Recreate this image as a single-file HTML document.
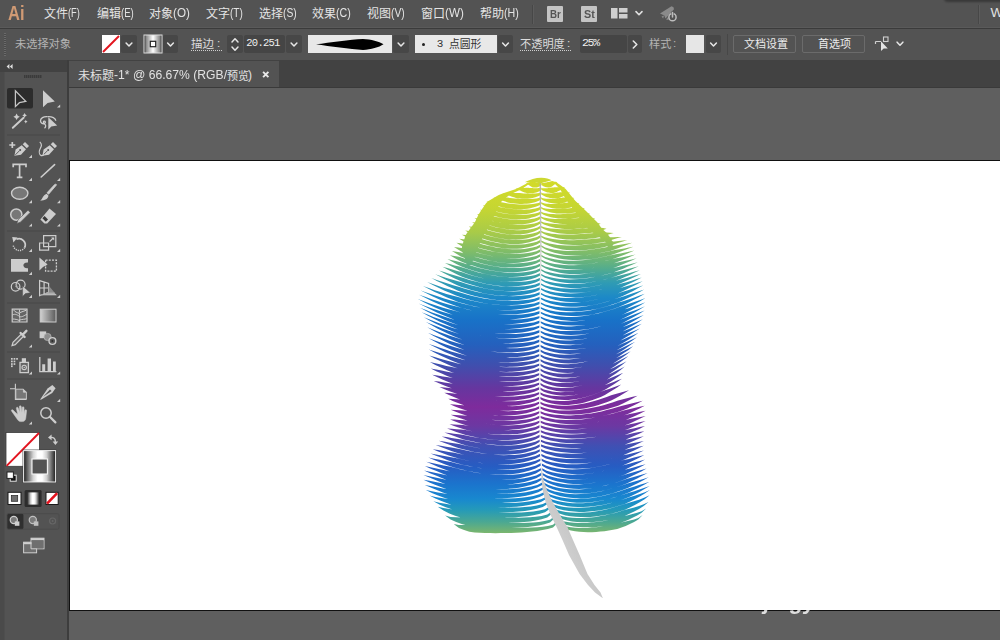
<!DOCTYPE html><html lang="zh"><head><meta charset="utf-8"><title>Adobe Illustrator</title><style>
*{margin:0;padding:0;box-sizing:border-box}
html,body{width:1000px;height:640px;overflow:hidden;background:#5f5f5f;font-family:"Liberation Sans",sans-serif}
#app{position:relative;width:1000px;height:640px;overflow:hidden;background:#5f5f5f}
.abs{position:absolute}
.sr{position:absolute;width:1px;height:1px;overflow:hidden;clip:rect(0 0 0 0);white-space:nowrap;font-size:1px;color:transparent}
svg{position:absolute;overflow:visible}
svg text.t{font-family:"Liberation Sans","Noto Sans CJK SC",sans-serif}
.lat{position:absolute;white-space:nowrap;line-height:1}
#menubar{left:0;top:0;width:1000px;height:29px;background:#535353}
#ctrl{left:0;top:29px;width:1000px;height:31px;background:#535353}
#tabs{left:69px;top:60px;width:931px;height:28px;background:#424242}
#tab{left:69px;top:61px;width:210px;height:26px;background:#535353}
#tools{left:0;top:60px;width:67px;height:580px;background:#535353}
#toolshead{left:0;top:60px;width:67px;height:12px;background:#424242}
#art{left:69px;top:160px;width:940px;height:451px;background:#fff;border:1px solid #111}
.btn{position:absolute;border:1px solid #6b6b6b;border-radius:2px}
.dd{position:absolute;background:#474747;border-radius:2px}
.inp{position:absolute;background:#454545;border-radius:2px}
</style></head><body><div id="app">
<div class="abs" id="art"></div>
<svg class="abs" style="left:0;top:0" width="1000" height="640" viewBox="0 0 1000 640">
<defs><linearGradient id="fg" gradientUnits="userSpaceOnUse" x1="0" y1="178" x2="0" y2="537"><stop offset="0.0000" stop-color="#d5db28"/><stop offset="0.0836" stop-color="#c6d632"/><stop offset="0.1504" stop-color="#a9cb48"/><stop offset="0.2061" stop-color="#7fbc69"/><stop offset="0.2507" stop-color="#55ad8c"/><stop offset="0.2925" stop-color="#2f9bb4"/><stop offset="0.3343" stop-color="#1c88c8"/><stop offset="0.3955" stop-color="#1872c8"/><stop offset="0.4652" stop-color="#2560bd"/><stop offset="0.5209" stop-color="#3f4fae"/><stop offset="0.5850" stop-color="#66369f"/><stop offset="0.6379" stop-color="#7e2b9c"/><stop offset="0.6908" stop-color="#6c38a2"/><stop offset="0.7465" stop-color="#4050b3"/><stop offset="0.8022" stop-color="#275cc2"/><stop offset="0.8524" stop-color="#1b74cd"/><stop offset="0.8942" stop-color="#1888cf"/><stop offset="0.9248" stop-color="#259ab8"/><stop offset="0.9582" stop-color="#4ba892"/><stop offset="0.9833" stop-color="#72b374"/><stop offset="1.0000" stop-color="#8cbc62"/></linearGradient>
<linearGradient id="qg" gradientUnits="userSpaceOnUse" x1="545" y1="560" x2="585" y2="540"><stop offset="0" stop-color="#e9e9e9"/><stop offset=".45" stop-color="#cfcfcf"/><stop offset="1" stop-color="#c4c4c4"/></linearGradient>
<linearGradient id="qg2" gradientUnits="userSpaceOnUse" x1="0" y1="178" x2="0" y2="500"><stop offset="0" stop-color="#adadad"/><stop offset=".18" stop-color="#c4c4c4"/><stop offset=".36" stop-color="#f6f6f6"/><stop offset=".88" stop-color="#f6f6f6"/><stop offset="1" stop-color="#dcdcdc"/></linearGradient></defs>
<path d="M533.3 181.0L527.6 183.0L523.8 185.0L520.0 187.0L516.0 189.0L510.0 191.0L504.0 193.0L498.7 195.0L495.3 197.0L491.9 199.0L488.5 201.0L486.2 203.0L484.8 205.0L483.5 207.0L482.1 209.0L480.8 211.0L479.5 213.0L478.3 215.0L477.4 217.0L476.4 219.0L475.5 221.0L474.4 223.0L472.9 225.0L471.4 227.0L469.9 229.0L468.5 231.0L467.0 233.0L465.7 235.0L465.0 237.0L464.4 239.0L463.7 241.0L463.0 243.0L462.3 245.0L462.0 247.0L461.7 249.0L462.0 251.0L462.8 253.0L463.7 255.0L464.5 257.0L465.1 259.0L465.6 261.0L466.2 263.0L466.7 265.0L470.7 265.0L471.7 263.0L472.7 261.0L473.6 259.0L474.6 257.0L475.4 255.0L476.1 253.0L476.8 251.0L477.5 249.0L478.3 247.0L479.0 245.0L480.0 243.0L480.9 241.0L481.9 239.0L482.9 237.0L483.8 235.0L484.9 233.0L486.1 231.0L487.3 229.0L488.6 227.0L489.8 225.0L491.0 223.0L491.9 221.0L492.8 219.0L493.6 217.0L494.5 215.0L495.3 213.0L496.3 211.0L497.3 209.0L498.3 207.0L499.2 205.0L500.2 203.0L502.0 201.0L504.4 199.0L506.9 197.0L509.4 195.0L513.2 193.0L517.6 191.0L521.9 189.0L524.8 187.0L527.6 185.0L530.3 183.0L534.5 181.0ZM552.2 181.0L557.4 183.0L560.2 185.0L563.0 187.0L565.7 189.0L567.3 191.0L568.9 193.0L570.5 195.0L572.1 197.0L573.7 199.0L575.5 201.0L577.6 203.0L579.7 205.0L581.8 207.0L583.9 209.0L586.0 211.0L588.0 213.0L590.0 215.0L591.9 217.0L593.9 219.0L596.0 221.0L597.9 223.0L599.3 225.0L600.7 227.0L602.2 229.0L604.5 231.0L606.8 233.0L608.2 235.0L609.8 237.0L610.8 239.0L612.2 241.0L614.1 243.0L613.0 245.0L612.0 247.0L610.9 249.0L610.7 251.0L608.3 251.0L607.9 249.0L607.6 247.0L607.2 245.0L606.8 243.0L604.3 241.0L601.8 239.0L599.3 237.0L596.4 235.0L593.5 233.0L590.6 231.0L588.4 229.0L586.7 227.0L585.0 225.0L583.3 223.0L581.6 221.0L580.2 219.0L578.8 217.0L577.3 215.0L575.9 213.0L574.5 211.0L573.0 209.0L571.5 207.0L570.0 205.0L568.5 203.0L567.0 201.0L565.7 199.0L564.5 197.0L563.4 195.0L562.2 193.0L561.1 191.0L559.9 189.0L558.0 187.0L556.0 185.0L554.0 183.0L550.3 181.0Z" fill="url(#fg)"/>
<path d="M541.4 182.8L540.6 182.9L539.9 182.8L539.1 182.7L538.3 182.6L537.5 182.5L536.8 182.4L536.0 182.3L535.2 182.1L534.5 182.0L533.7 181.8L532.9 181.7L532.2 181.8L531.4 182.0L530.6 182.1L529.9 182.3L529.1 182.4L528.3 182.5L527.5 182.6L526.8 182.8L526.0 183.0L526.0 183.0L526.8 183.7L527.5 184.2L528.3 184.8L529.1 185.3L529.9 185.8L530.6 186.3L531.4 186.8L532.2 187.2L532.9 187.6L533.7 187.6L534.5 187.6L535.2 187.6L536.0 187.5L536.8 187.4L537.5 187.2L538.3 186.9L539.1 186.6L539.9 186.2L540.6 185.8L541.4 185.2ZM541.3 187.6L540.1 187.9L538.8 188.1L537.5 188.2L536.2 188.2L534.9 188.2L533.6 188.2L532.3 188.1L531.0 188.1L529.7 188.0L528.4 187.8L527.2 187.7L525.9 187.8L524.6 187.9L523.3 188.0L522.0 188.1L520.7 188.2L519.4 188.2L518.1 188.3L516.8 188.4L515.5 188.5L515.5 188.5L516.8 189.2L518.1 189.7L519.4 190.3L520.7 190.8L522.0 191.4L523.3 191.9L524.6 192.4L525.9 192.8L527.2 193.2L528.4 193.3L529.7 193.3L531.0 193.3L532.3 193.2L533.6 193.0L534.9 192.7L536.2 192.4L537.5 192.0L538.8 191.5L540.1 190.8L541.3 189.9ZM541.3 192.3L539.3 192.9L537.4 193.3L535.4 193.5L533.5 193.6L531.5 193.7L529.6 193.7L527.6 193.6L525.7 193.6L523.7 193.4L521.8 193.3L519.8 193.1L517.9 192.9L515.9 192.9L514.0 192.9L512.0 193.0L510.1 193.0L508.1 193.0L506.2 193.0L504.2 193.0L502.2 193.0L502.2 193.0L504.2 193.8L506.2 194.5L508.1 195.3L510.1 196.0L512.0 196.7L514.0 197.3L515.9 198.0L517.9 198.4L519.8 198.6L521.8 198.7L523.7 198.8L525.7 198.8L527.6 198.7L529.6 198.5L531.5 198.2L533.5 197.8L535.4 197.3L537.4 196.6L539.3 195.8L541.3 194.7ZM541.2 197.1L538.8 197.9L536.4 198.4L534.0 198.7L531.6 198.9L529.2 199.1L526.8 199.1L524.5 199.1L522.1 199.0L519.7 198.9L517.3 198.7L514.9 198.5L512.5 198.2L510.1 197.9L507.7 197.6L505.3 197.5L502.9 197.5L500.5 197.4L498.1 197.3L495.7 197.2L493.3 197.1L493.3 197.1L495.7 198.1L498.1 199.0L500.5 199.9L502.9 200.8L505.3 201.6L507.7 202.4L510.1 202.9L512.5 203.2L514.9 203.5L517.3 203.7L519.7 203.9L522.1 203.9L524.5 203.8L526.8 203.7L529.2 203.4L531.6 202.9L534.0 202.4L536.4 201.7L538.8 200.8L541.2 199.4ZM541.2 201.8L538.4 202.9L535.7 203.5L533.0 204.0L530.2 204.3L527.5 204.5L524.7 204.6L522.0 204.6L519.3 204.5L516.5 204.3L513.8 204.0L511.1 203.7L508.3 203.4L505.6 203.0L502.9 202.5L500.1 202.0L497.4 201.9L494.7 201.7L491.9 201.5L489.2 201.3L486.4 201.2L486.4 201.2L489.2 202.4L491.9 203.5L494.7 204.6L497.4 205.7L500.1 206.8L502.9 207.4L505.6 207.9L508.3 208.4L511.1 208.7L513.8 209.0L516.5 209.2L519.3 209.3L522.0 209.2L524.7 209.1L527.5 208.7L530.2 208.3L533.0 207.6L535.7 206.8L538.4 205.8L541.2 204.2ZM541.1 206.6L538.2 207.8L535.3 208.5L532.3 209.0L529.4 209.4L526.5 209.6L523.6 209.7L520.6 209.6L517.7 209.5L514.8 209.3L511.9 209.0L509.0 208.7L506.0 208.2L503.1 207.7L500.2 207.2L497.3 206.6L494.3 206.0L491.4 205.9L488.5 205.7L485.6 205.5L482.7 205.4L482.7 205.4L485.6 206.9L488.5 208.3L491.4 209.6L494.3 210.9L497.3 211.7L500.2 212.4L503.1 213.0L506.0 213.5L509.0 214.0L511.9 214.3L514.8 214.5L517.7 214.6L520.6 214.5L523.6 214.3L526.5 214.0L529.4 213.5L532.3 212.7L535.3 211.8L538.2 210.7L541.1 208.9ZM541.1 211.3L538.0 212.7L534.9 213.6L531.8 214.1L528.8 214.6L525.7 214.8L522.6 214.9L519.6 214.9L516.5 214.8L513.4 214.6L510.4 214.3L507.3 213.9L504.2 213.4L501.2 212.9L498.1 212.2L495.0 211.6L492.0 210.9L488.9 210.4L485.8 210.1L482.8 209.9L479.7 209.8L479.7 209.8L482.8 211.4L485.8 212.9L488.9 214.4L492.0 215.5L495.0 216.3L498.1 217.0L501.2 217.7L504.2 218.2L507.3 218.7L510.4 219.1L513.4 219.3L516.5 219.5L519.6 219.4L522.6 219.2L525.7 218.9L528.8 218.4L531.8 217.6L534.9 216.7L538.0 215.5L541.1 213.7ZM541.0 216.1L537.8 217.6L534.6 218.5L531.4 219.1L528.2 219.5L525.0 219.8L521.8 220.0L518.6 219.9L515.3 219.8L512.1 219.6L508.9 219.2L505.7 218.8L502.5 218.3L499.3 217.6L496.1 217.0L492.9 216.2L489.7 215.5L486.5 214.6L483.3 214.4L480.1 214.2L476.9 214.1L476.9 214.1L480.1 215.9L483.3 217.7L486.5 219.2L489.7 220.2L492.9 221.1L496.1 221.9L499.3 222.6L502.5 223.2L505.7 223.8L508.9 224.2L512.1 224.5L515.3 224.6L518.6 224.6L521.8 224.4L525.0 224.0L528.2 223.5L531.4 222.7L534.6 221.7L537.8 220.4L541.0 218.4ZM540.9 220.8L537.6 222.5L534.3 223.4L531.0 224.1L527.6 224.5L524.3 224.8L521.0 224.9L517.7 224.9L514.4 224.8L511.0 224.5L507.7 224.1L504.4 223.6L501.1 223.0L497.8 222.3L494.4 221.6L491.1 220.8L487.8 219.9L484.5 219.0L481.1 218.5L477.8 218.3L474.5 218.2L474.5 218.2L477.8 220.2L481.1 222.1L484.5 223.8L487.8 224.8L491.1 225.8L494.4 226.7L497.8 227.5L501.1 228.2L504.4 228.8L507.7 229.3L511.0 229.6L514.4 229.7L517.7 229.7L521.0 229.5L524.3 229.2L527.6 228.6L531.0 227.7L534.3 226.7L537.6 225.3L540.9 223.2ZM540.9 225.6L537.4 227.4L534.0 228.4L530.6 229.2L527.1 229.7L523.7 230.0L520.3 230.2L516.8 230.2L513.4 230.0L509.9 229.7L506.5 229.3L503.1 228.7L499.6 228.1L496.2 227.4L492.8 226.5L489.3 225.6L485.9 224.6L482.4 223.6L479.0 223.0L475.6 222.6L472.1 222.3L472.1 222.3L475.6 224.4L479.0 226.3L482.4 228.0L485.9 229.1L489.3 230.2L492.8 231.2L496.2 232.0L499.6 232.8L503.1 233.5L506.5 234.0L509.9 234.4L513.4 234.6L516.8 234.6L520.3 234.4L523.7 234.1L527.1 233.5L530.6 232.6L534.0 231.5L537.4 230.1L540.9 227.9ZM540.8 230.3L537.2 232.2L533.6 233.2L530.0 234.0L526.4 234.6L522.8 234.9L519.2 235.0L515.6 235.0L512.0 234.8L508.4 234.5L504.8 234.0L501.2 233.4L497.6 232.7L494.0 231.9L490.3 231.0L486.7 230.0L483.1 229.0L479.5 227.8L475.9 227.1L472.3 226.7L468.7 226.4L468.7 226.4L472.3 228.7L475.9 230.8L479.5 232.6L483.1 233.8L486.7 234.9L490.3 235.9L494.0 236.9L497.6 237.7L501.2 238.4L504.8 239.0L508.4 239.4L512.0 239.6L515.6 239.7L519.2 239.5L522.8 239.1L526.4 238.5L530.0 237.6L533.6 236.5L537.2 235.0L540.8 232.7ZM540.8 235.1L537.0 237.0L533.2 238.1L529.4 238.9L525.7 239.4L521.9 239.8L518.1 239.9L514.3 239.9L510.6 239.7L506.8 239.4L503.0 238.9L499.2 238.3L495.5 237.5L491.7 236.7L487.9 235.7L484.1 234.7L480.3 233.6L476.6 232.4L472.8 231.5L469.0 230.9L465.2 230.5L465.2 230.5L469.0 232.9L472.8 235.0L476.6 236.7L480.3 237.9L484.1 239.1L487.9 240.2L491.7 241.2L495.5 242.0L499.2 242.8L503.0 243.4L506.8 243.8L510.6 244.1L514.3 244.1L518.1 244.0L521.9 243.7L525.7 243.1L529.4 242.3L533.2 241.1L537.0 239.7L540.8 237.4ZM540.7 239.8L536.8 241.7L532.8 242.8L528.9 243.6L525.0 244.2L521.0 244.5L517.1 244.6L513.1 244.6L509.2 244.4L505.3 244.0L501.3 243.5L497.4 242.9L493.4 242.1L489.5 241.2L485.6 240.2L481.6 239.1L477.7 237.9L473.7 236.7L469.8 235.7L465.9 235.1L461.9 234.7L461.9 234.7L465.9 237.1L469.8 239.3L473.7 241.0L477.7 242.3L481.6 243.5L485.6 244.6L489.5 245.7L493.4 246.6L497.4 247.3L501.3 248.0L505.3 248.4L509.2 248.7L513.1 248.8L517.1 248.7L521.0 248.4L525.0 247.8L528.9 247.0L532.8 245.9L536.8 244.4L540.7 242.2ZM540.7 244.6L536.6 246.5L532.5 247.6L528.4 248.3L524.4 248.9L520.3 249.2L516.2 249.3L512.1 249.3L508.1 249.0L504.0 248.6L499.9 248.1L495.8 247.4L491.8 246.6L487.7 245.7L483.6 244.7L479.5 243.5L475.5 242.3L471.4 241.0L467.3 239.9L463.3 239.3L459.2 238.8L459.2 238.8L463.3 241.3L467.3 243.5L471.4 245.2L475.5 246.6L479.5 247.9L483.6 249.1L487.7 250.1L491.8 251.1L495.8 251.9L499.9 252.6L504.0 253.1L508.1 253.4L512.1 253.5L516.2 253.4L520.3 253.1L524.4 252.6L528.4 251.7L532.5 250.6L536.6 249.2L540.7 246.9ZM540.6 249.3L536.4 251.2L532.2 252.2L528.0 253.0L523.8 253.5L519.6 253.8L515.3 253.9L511.1 253.8L506.9 253.5L502.7 253.1L498.5 252.5L494.3 251.8L490.1 251.0L485.9 250.0L481.7 249.0L477.5 247.8L473.3 246.5L469.1 245.1L464.9 244.0L460.6 243.3L456.4 242.8L456.4 242.8L460.6 245.5L464.9 247.9L469.1 249.7L473.3 251.1L477.5 252.4L481.7 253.7L485.9 254.8L490.1 255.8L494.3 256.7L498.5 257.4L502.7 257.9L506.9 258.2L511.1 258.3L515.3 258.3L519.6 257.9L523.8 257.4L528.0 256.6L532.2 255.5L536.4 254.0L540.6 251.7ZM540.5 254.1L536.2 255.9L531.9 257.0L527.6 257.7L523.2 258.2L518.9 258.5L514.6 258.6L510.3 258.5L505.9 258.2L501.6 257.8L497.3 257.2L493.0 256.4L488.6 255.5L484.3 254.5L480.0 253.4L475.7 252.2L471.3 250.8L467.0 249.4L462.7 248.2L458.4 247.5L454.0 247.0L454.0 247.0L458.4 249.7L462.7 252.2L467.0 254.0L471.3 255.5L475.7 256.9L480.0 258.1L484.3 259.3L488.6 260.3L493.0 261.2L497.3 262.0L501.6 262.5L505.9 262.9L510.3 263.0L514.6 263.0L518.9 262.7L523.2 262.1L527.6 261.3L531.9 260.2L536.2 258.7L540.5 256.4ZM540.5 258.8L536.1 260.7L531.6 261.8L527.2 262.5L522.8 263.1L518.4 263.3L513.9 263.4L509.5 263.3L505.1 263.0L500.7 262.5L496.2 261.9L491.8 261.1L487.4 260.2L483.0 259.2L478.5 258.0L474.1 256.7L469.7 255.4L465.3 253.9L460.8 252.5L456.4 251.7L452.0 251.1L452.0 251.1L456.4 253.8L460.8 256.4L465.3 258.2L469.7 259.7L474.1 261.1L478.5 262.4L483.0 263.7L487.4 264.7L491.8 265.7L496.2 266.4L500.7 267.0L505.1 267.4L509.5 267.6L513.9 267.6L518.4 267.3L522.8 266.8L527.2 266.0L531.6 264.9L536.1 263.4L540.5 261.2ZM540.4 263.6L535.9 265.4L531.4 266.5L526.9 267.3L522.3 267.8L517.8 268.0L513.3 268.1L508.8 268.0L504.2 267.7L499.7 267.2L495.2 266.5L490.7 265.7L486.1 264.8L481.6 263.7L477.1 262.5L472.6 261.2L468.0 259.7L463.5 258.2L459.0 256.8L454.5 256.0L449.9 255.2L449.9 255.2L454.5 258.0L459.0 260.6L463.5 262.5L468.0 264.0L472.6 265.5L477.1 266.9L481.6 268.2L486.1 269.3L490.7 270.3L495.2 271.1L499.7 271.7L504.2 272.1L508.8 272.3L513.3 272.3L517.8 272.0L522.3 271.5L526.9 270.7L531.4 269.7L535.9 268.2L540.4 265.9ZM540.4 268.3L535.7 270.2L531.1 271.3L526.4 272.0L521.8 272.5L517.2 272.8L512.5 272.8L507.9 272.7L503.2 272.3L498.6 271.8L494.0 271.1L489.3 270.3L484.7 269.3L480.0 268.2L475.4 266.9L470.8 265.5L466.1 264.0L461.5 262.4L456.8 261.3L452.2 260.2L447.5 259.1L447.5 259.1L452.2 261.8L456.8 264.2L461.5 266.5L466.1 268.2L470.8 269.8L475.4 271.2L480.0 272.5L484.7 273.7L489.3 274.7L494.0 275.6L498.6 276.3L503.2 276.7L507.9 277.0L512.5 277.0L517.2 276.7L521.8 276.2L526.4 275.5L531.1 274.4L535.7 273.0L540.4 270.7ZM540.3 273.1L535.5 274.9L530.8 275.9L526.0 276.6L521.3 277.1L516.5 277.3L511.7 277.3L507.0 277.1L502.2 276.7L497.4 276.2L492.7 275.5L487.9 274.6L483.1 273.5L478.4 272.4L473.6 271.0L468.9 269.6L464.1 268.0L459.3 266.6L454.6 265.4L449.8 264.1L445.0 262.9L445.0 262.9L449.8 265.6L454.6 268.1L459.3 270.5L464.1 272.5L468.9 274.2L473.6 275.7L478.4 277.1L483.1 278.3L487.9 279.4L492.7 280.3L497.4 281.0L502.2 281.5L507.0 281.8L511.7 281.8L516.5 281.6L521.3 281.1L526.0 280.3L530.8 279.2L535.5 277.7L540.3 275.4ZM540.3 277.8L535.4 279.7L530.5 280.7L525.6 281.4L520.7 281.8L515.8 282.0L510.9 282.0L506.0 281.8L501.2 281.4L496.3 280.8L491.4 280.0L486.5 279.1L481.6 278.0L476.7 276.8L471.8 275.4L467.0 273.9L462.1 272.2L457.2 271.0L452.3 269.6L447.4 268.1L442.5 266.7L442.5 266.7L447.4 269.4L452.3 271.9L457.2 274.4L462.1 276.7L467.0 278.4L471.8 280.0L476.7 281.4L481.6 282.7L486.5 283.9L491.4 284.8L496.3 285.6L501.2 286.1L506.0 286.4L510.9 286.5L515.8 286.3L520.7 285.8L525.6 285.0L530.5 284.0L535.4 282.5L540.3 280.2ZM540.2 282.6L535.1 284.4L530.1 285.5L525.0 286.2L520.0 286.6L514.9 286.8L509.8 286.8L504.8 286.6L499.7 286.2L494.7 285.5L489.6 284.7L484.6 283.8L479.5 282.6L474.4 281.3L469.4 279.9L464.3 278.3L459.3 276.7L454.2 275.3L449.1 273.7L444.1 272.1L439.0 270.5L439.0 270.5L444.1 273.2L449.1 275.7L454.2 278.2L459.3 280.5L464.3 282.5L469.4 284.1L474.4 285.6L479.5 287.0L484.6 288.2L489.6 289.2L494.7 290.0L499.7 290.6L504.8 290.9L509.8 291.0L514.9 290.9L520.0 290.4L525.0 289.7L530.1 288.6L535.1 287.2L540.2 284.9ZM540.1 287.3L534.9 289.1L529.7 290.1L524.4 290.8L519.2 291.2L513.9 291.4L508.7 291.3L503.4 291.0L498.2 290.6L492.9 289.9L487.7 289.1L482.5 288.0L477.2 286.8L472.0 285.5L466.7 284.0L461.5 282.3L456.2 280.8L451.0 279.3L445.8 277.7L440.5 276.0L435.3 274.2L435.3 274.2L440.5 277.1L445.8 279.7L451.0 282.2L456.2 284.7L461.5 286.9L466.7 288.6L472.0 290.2L477.2 291.6L482.5 292.9L487.7 294.0L492.9 294.8L498.2 295.4L503.4 295.8L508.7 295.9L513.9 295.8L519.2 295.3L524.4 294.6L529.7 293.5L534.9 292.0L540.1 289.7ZM540.1 292.1L534.6 293.9L529.2 294.9L523.8 295.6L518.3 296.0L512.9 296.2L507.5 296.1L502.0 295.9L496.6 295.4L491.2 294.7L485.7 293.8L480.3 292.7L474.9 291.5L469.4 290.0L464.0 288.5L458.6 286.8L453.1 285.3L447.7 283.6L442.3 281.8L436.8 280.0L431.4 278.1L431.4 278.1L436.8 280.9L442.3 283.6L447.7 286.2L453.1 288.6L458.6 290.9L464.0 292.8L469.4 294.4L474.9 295.9L480.3 297.2L485.7 298.3L491.2 299.2L496.6 299.9L502.0 300.3L507.5 300.4L512.9 300.3L518.3 299.9L523.8 299.2L529.2 298.2L534.6 296.7L540.1 294.4ZM540.0 296.8L534.4 298.7L528.7 299.7L523.1 300.3L517.5 300.7L511.8 300.9L506.2 300.8L500.5 300.5L494.9 300.0L489.2 299.3L483.6 298.4L478.0 297.3L472.3 296.0L466.7 294.5L461.0 292.8L455.4 291.2L449.8 289.6L444.1 287.9L438.5 286.0L432.8 284.1L427.2 282.1L427.2 282.1L432.8 285.0L438.5 287.7L444.1 290.4L449.8 292.8L455.4 295.2L461.0 297.2L466.7 298.9L472.3 300.5L478.0 301.8L483.6 302.9L489.2 303.9L494.9 304.6L500.5 305.0L506.2 305.2L511.8 305.1L517.5 304.7L523.1 304.0L528.7 302.9L534.4 301.5L540.0 299.2ZM540.0 301.6L534.1 303.4L528.3 304.3L522.4 304.9L516.6 305.3L510.7 305.4L504.9 305.3L499.0 305.0L493.2 304.4L487.3 303.7L481.5 302.8L475.6 301.6L469.8 300.3L463.9 298.7L458.1 297.0L452.2 295.5L446.4 293.9L440.5 292.1L434.7 290.2L428.8 288.1L423.0 286.1L423.0 286.1L428.8 289.1L434.7 292.0L440.5 294.6L446.4 297.2L452.2 299.6L458.1 301.9L463.9 303.6L469.8 305.2L475.6 306.6L481.5 307.7L487.3 308.7L493.2 309.4L499.0 309.9L504.9 310.1L510.7 310.0L516.6 309.6L522.4 308.8L528.3 307.8L534.1 306.3L540.0 303.9ZM539.9 306.3L534.0 308.1L528.0 309.1L522.0 309.8L516.0 310.2L510.0 310.3L504.1 310.2L498.1 309.9L492.1 309.3L486.1 308.5L480.1 307.6L474.2 306.4L468.2 305.0L462.2 303.5L456.2 301.8L450.2 300.2L444.2 298.5L438.3 296.6L432.3 294.6L426.3 292.5L420.3 290.3L420.3 290.3L426.3 293.3L432.3 296.2L438.3 298.9L444.2 301.4L450.2 303.8L456.2 306.1L462.2 308.0L468.2 309.6L474.2 311.0L480.1 312.2L486.1 313.2L492.1 313.9L498.1 314.4L504.1 314.6L510.0 314.5L516.0 314.2L522.0 313.5L528.0 312.4L534.0 311.0L539.9 308.7ZM539.9 311.1L533.9 312.8L527.8 313.8L521.8 314.4L515.7 314.8L509.7 314.9L503.6 314.7L497.6 314.4L491.6 313.8L485.5 313.0L479.5 312.0L473.4 310.8L467.4 309.4L461.3 307.8L455.3 306.3L449.3 304.7L443.2 302.9L437.2 301.0L431.1 299.0L425.1 296.8L419.0 294.7L419.0 294.7L425.1 297.8L431.1 300.7L437.2 303.5L443.2 306.1L449.3 308.5L455.3 310.8L461.3 312.8L467.4 314.4L473.4 315.9L479.5 317.1L485.5 318.1L491.6 318.8L497.6 319.3L503.6 319.5L509.7 319.4L515.7 319.1L521.8 318.3L527.8 317.3L533.9 315.8L539.9 313.4ZM539.9 315.9L533.8 317.6L527.7 318.5L521.5 319.2L515.4 319.5L509.3 319.6L503.2 319.4L497.1 319.1L491.0 318.5L484.9 317.7L478.8 316.7L472.7 315.5L466.6 314.1L460.5 312.4L454.4 310.8L448.3 309.2L442.2 307.4L436.1 305.5L430.0 303.4L423.9 301.3L417.8 299.1L417.8 299.1L423.9 302.2L430.0 305.2L436.1 308.0L442.2 310.6L448.3 313.1L454.4 315.4L460.5 317.4L466.6 319.1L472.7 320.5L478.8 321.7L484.9 322.8L491.0 323.5L497.1 324.0L503.2 324.3L509.3 324.2L515.4 323.8L521.5 323.1L527.7 322.0L533.8 320.5L539.9 318.1ZM539.8 320.6L533.8 322.4L527.7 323.3L521.6 323.9L515.6 324.3L509.5 324.4L503.5 324.2L497.4 323.8L491.3 323.2L485.3 322.4L479.2 321.4L473.1 320.2L467.1 318.7L461.0 317.1L455.0 315.5L448.9 313.8L442.8 312.0L436.8 310.0L430.7 307.9L424.7 305.7L418.6 303.4L418.6 303.4L424.7 306.6L430.7 309.6L436.8 312.4L442.8 315.1L448.9 317.6L455.0 319.9L461.0 322.0L467.1 323.6L473.1 325.1L479.2 326.4L485.3 327.4L491.3 328.2L497.4 328.7L503.5 328.9L509.5 328.9L515.6 328.5L521.6 327.8L527.7 326.7L533.8 325.3L539.8 322.9ZM539.8 325.4L533.8 327.2L527.8 328.1L521.8 328.8L515.8 329.1L509.8 329.2L503.8 329.1L497.9 328.7L491.9 328.1L485.9 327.3L479.9 326.2L473.9 325.0L467.9 323.5L461.9 321.8L455.9 320.2L449.9 318.5L443.9 316.6L438.0 314.5L432.0 312.4L426.0 310.1L420.0 307.8L420.0 307.8L426.0 311.0L432.0 314.0L438.0 316.8L443.9 319.5L449.9 322.0L455.9 324.3L461.9 326.4L467.9 328.1L473.9 329.6L479.9 330.9L485.9 331.9L491.9 332.7L497.9 333.2L503.8 333.5L509.8 333.5L515.8 333.1L521.8 332.4L527.8 331.4L533.8 330.0L539.8 327.6ZM539.8 330.1L533.8 331.9L527.9 332.9L522.0 333.5L516.1 333.9L510.2 334.0L504.3 333.8L498.4 333.4L492.5 332.8L486.6 331.9L480.7 330.9L474.8 329.6L468.8 328.1L462.9 326.4L457.0 324.8L451.1 323.0L445.2 321.1L439.3 319.1L433.4 316.9L427.5 314.6L421.6 312.3L421.6 312.3L427.5 315.5L433.4 318.6L439.3 321.4L445.2 324.1L451.1 326.7L457.0 329.0L462.9 331.1L468.8 332.8L474.8 334.3L480.7 335.6L486.6 336.7L492.5 337.5L498.4 338.0L504.3 338.2L510.2 338.2L516.1 337.9L522.0 337.2L527.9 336.2L533.8 334.7L539.8 332.4ZM539.7 334.9L533.9 336.7L528.1 337.7L522.3 338.3L516.5 338.7L510.7 338.8L504.9 338.6L499.1 338.2L493.3 337.6L487.5 336.7L481.7 335.7L475.9 334.4L470.1 332.9L464.3 331.2L458.6 329.6L452.8 327.9L447.0 326.0L441.2 323.9L435.4 321.7L429.6 319.5L423.8 317.2L423.8 317.2L429.6 320.4L435.4 323.4L441.2 326.3L447.0 329.0L452.8 331.5L458.6 333.8L464.3 336.0L470.1 337.6L475.9 339.1L481.7 340.4L487.5 341.4L493.3 342.2L499.1 342.7L504.9 343.0L510.7 342.9L516.5 342.6L522.3 341.9L528.1 340.9L533.9 339.5L539.7 337.1ZM539.7 339.6L534.0 341.4L528.3 342.3L522.6 343.0L516.9 343.3L511.2 343.4L505.6 343.2L499.9 342.8L494.2 342.1L488.5 341.3L482.8 340.2L477.1 338.9L471.4 337.4L465.8 335.8L460.1 334.2L454.4 332.5L448.7 330.7L443.0 328.7L437.3 326.5L431.6 324.3L426.0 322.1L426.0 322.1L431.6 325.3L437.3 328.4L443.0 331.2L448.7 334.0L454.4 336.5L460.1 338.8L465.8 341.0L471.4 342.7L477.1 344.1L482.8 345.4L488.5 346.4L494.2 347.2L499.9 347.7L505.6 347.9L511.2 347.8L516.9 347.5L522.6 346.8L528.3 345.7L534.0 344.2L539.7 341.9ZM539.6 344.4L534.0 346.2L528.4 347.2L522.8 347.8L517.2 348.2L511.6 348.3L505.9 348.1L500.3 347.7L494.7 347.1L489.1 346.3L483.5 345.2L477.9 344.0L472.3 342.5L466.6 340.9L461.0 339.3L455.4 337.6L449.8 335.8L444.2 333.8L438.6 331.7L433.0 329.5L427.3 327.3L427.3 327.3L433.0 330.5L438.6 333.5L444.2 336.3L449.8 338.9L455.4 341.4L461.0 343.7L466.6 345.8L472.3 347.4L477.9 348.9L483.5 350.1L489.1 351.1L494.7 351.8L500.3 352.3L505.9 352.5L511.6 352.5L517.2 352.1L522.8 351.4L528.4 350.4L534.0 349.0L539.6 346.6ZM539.6 349.1L534.0 350.9L528.4 351.9L522.9 352.5L517.3 352.9L511.7 353.0L506.1 352.9L500.5 352.5L495.0 351.9L489.4 351.1L483.8 350.0L478.2 348.8L472.6 347.4L467.1 345.8L461.5 344.3L455.9 342.7L450.3 340.9L444.7 339.0L439.2 337.0L433.6 334.9L428.0 332.8L428.0 332.8L433.6 335.9L439.2 338.8L444.7 341.6L450.3 344.2L455.9 346.6L461.5 348.8L467.1 350.9L472.6 352.5L478.2 353.9L483.8 355.1L489.4 356.0L495.0 356.8L500.5 357.2L506.1 357.4L511.7 357.3L517.3 356.9L522.9 356.2L528.4 355.2L534.0 353.7L539.6 351.4ZM539.6 353.9L534.1 355.7L528.5 356.6L523.0 357.3L517.4 357.6L511.9 357.7L506.3 357.6L500.8 357.2L495.2 356.7L489.7 355.9L484.1 354.9L478.6 353.7L473.0 352.3L467.5 350.8L461.9 349.3L456.4 347.8L450.8 346.0L445.3 344.2L439.8 342.3L434.2 340.3L428.7 338.2L428.7 338.2L434.2 341.3L439.8 344.2L445.3 346.9L450.8 349.4L456.4 351.8L461.9 354.0L467.5 356.0L473.0 357.6L478.6 358.9L484.1 360.1L489.7 361.0L495.2 361.7L500.8 362.1L506.3 362.3L511.9 362.1L517.4 361.7L523.0 361.0L528.5 359.9L534.1 358.5L539.6 356.1ZM539.6 358.6L534.1 360.4L528.5 361.4L523.0 362.1L517.4 362.5L511.9 362.6L506.4 362.5L500.8 362.2L495.3 361.7L489.7 360.9L484.2 359.9L478.7 358.8L473.1 357.5L467.6 356.0L462.0 354.6L456.5 353.1L451.0 351.4L445.4 349.6L439.9 347.7L434.3 345.8L428.8 343.9L428.8 343.9L434.3 346.8L439.9 349.6L445.4 352.2L451.0 354.6L456.5 356.9L462.0 359.0L467.6 361.0L473.1 362.5L478.7 363.8L484.2 364.9L489.7 365.8L495.3 366.4L500.8 366.8L506.4 366.9L511.9 366.8L517.4 366.4L523.0 365.7L528.5 364.6L534.1 363.2L539.6 360.9ZM539.6 363.4L534.1 365.2L528.5 366.1L523.0 366.8L517.4 367.2L511.9 367.3L506.4 367.2L500.8 366.9L495.3 366.3L489.7 365.6L484.2 364.7L478.7 363.6L473.1 362.3L467.6 360.8L462.0 359.4L456.5 358.0L451.0 356.4L445.4 354.8L439.9 353.0L434.3 351.3L428.8 349.5L428.8 349.5L434.3 352.5L439.9 355.2L445.4 357.8L451.0 360.2L456.5 362.5L462.0 364.6L467.6 366.4L473.1 367.8L478.7 369.0L484.2 370.0L489.7 370.9L495.3 371.5L500.8 371.8L506.4 371.9L511.9 371.8L517.4 371.3L523.0 370.5L528.5 369.5L534.1 368.0L539.6 365.6ZM539.6 368.1L534.1 369.9L528.6 371.0L523.0 371.7L517.5 372.1L512.0 372.3L506.5 372.2L500.9 371.9L495.4 371.4L489.9 370.8L484.4 369.9L478.9 368.8L473.3 367.6L467.8 366.2L462.3 364.6L456.8 363.3L451.3 361.8L445.7 360.3L440.2 358.7L434.7 357.1L429.2 355.6L429.2 355.6L434.7 358.5L440.2 361.1L445.7 363.6L451.3 365.9L456.8 368.0L462.3 370.0L467.8 371.5L473.3 372.8L478.9 373.9L484.4 374.9L489.9 375.7L495.4 376.2L500.9 376.5L506.5 376.6L512.0 376.4L517.5 375.9L523.0 375.2L528.6 374.1L534.1 372.7L539.6 370.4ZM539.6 372.9L534.1 374.7L528.6 375.7L523.2 376.3L517.7 376.8L512.2 376.9L506.7 376.9L501.2 376.7L495.7 376.2L490.3 375.6L484.8 374.8L479.3 373.8L473.8 372.6L468.3 371.3L462.8 369.9L457.4 368.3L451.9 367.1L446.4 365.9L440.9 364.5L435.4 363.2L429.9 362.0L429.9 362.0L435.4 364.9L440.9 367.5L446.4 369.9L451.9 372.2L457.4 374.3L462.8 375.8L468.3 377.2L473.8 378.4L479.3 379.4L484.8 380.3L490.3 380.9L495.7 381.4L501.2 381.6L506.7 381.6L512.2 381.4L517.7 380.9L523.2 380.1L528.6 379.0L534.1 377.5L539.6 375.1ZM539.6 377.6L534.2 379.4L528.7 380.5L523.3 381.2L517.8 381.6L512.4 381.9L507.0 381.9L501.5 381.7L496.1 381.3L490.6 380.8L485.2 380.0L479.8 379.1L474.3 378.1L468.9 376.9L463.4 375.6L458.0 374.1L452.6 372.8L447.1 371.7L441.7 370.6L436.2 369.5L430.8 368.5L430.8 368.5L436.2 371.2L441.7 373.6L447.1 375.9L452.6 378.1L458.0 379.8L463.4 381.2L468.9 382.4L474.3 383.5L479.8 384.5L485.2 385.2L490.6 385.8L496.1 386.2L501.5 386.4L507.0 386.4L512.4 386.1L517.8 385.6L523.3 384.8L528.7 383.7L534.2 382.2L539.6 379.9ZM539.6 382.4L534.2 384.2L528.9 385.2L523.5 385.9L518.1 386.4L512.7 386.6L507.4 386.7L502.0 386.5L496.6 386.2L491.2 385.7L485.9 385.0L480.5 384.2L475.1 383.2L469.8 382.1L464.4 380.9L459.0 379.5L453.6 378.3L448.3 377.3L442.9 376.4L437.5 375.5L432.1 374.7L432.1 374.7L437.5 377.3L442.9 379.7L448.3 381.9L453.6 383.9L459.0 385.5L464.4 386.7L469.8 387.8L475.1 388.8L480.5 389.7L485.9 390.4L491.2 391.0L496.6 391.3L502.0 391.4L507.4 391.3L512.7 391.0L518.1 390.4L523.5 389.6L528.9 388.5L534.2 387.0L539.6 384.6ZM539.6 387.1L534.3 389.0L529.0 390.0L523.7 390.8L518.4 391.3L513.1 391.6L507.8 391.7L502.5 391.6L497.2 391.3L491.9 390.9L486.7 390.3L481.4 389.5L476.1 388.7L470.8 387.7L465.5 386.5L460.2 385.3L454.9 384.0L449.6 383.2L444.3 382.4L439.0 381.6L433.7 380.9L433.7 380.9L439.0 383.3L444.3 385.5L449.6 387.6L454.9 389.5L460.2 390.8L465.5 391.9L470.8 392.9L476.1 393.8L481.4 394.6L486.7 395.3L491.9 395.7L497.2 396.0L502.5 396.1L507.8 396.0L513.1 395.7L518.4 395.1L523.7 394.3L529.0 393.2L534.3 391.7L539.6 389.4ZM539.6 391.9L534.6 393.7L529.6 394.8L524.6 395.6L519.6 396.1L514.6 396.5L509.6 396.6L504.6 396.5L499.6 396.3L494.6 395.9L489.6 395.3L484.6 394.7L479.6 393.9L474.6 392.9L469.6 391.9L464.6 390.8L459.6 389.5L454.6 388.8L449.5 388.1L444.5 387.4L439.5 386.9L439.5 386.9L444.5 389.2L449.5 391.2L454.6 393.1L459.6 394.9L464.6 396.1L469.6 397.1L474.6 398.1L479.6 398.9L484.6 399.7L489.6 400.2L494.6 400.6L499.6 400.9L504.6 400.9L509.6 400.8L514.6 400.4L519.6 399.8L524.6 399.0L529.6 397.9L534.6 396.4L539.6 394.1ZM539.6 396.6L534.8 398.5L530.1 399.5L525.3 400.3L520.5 400.8L515.8 401.2L511.0 401.3L506.2 401.2L501.5 401.0L496.7 400.7L491.9 400.2L487.2 399.5L482.4 398.8L477.6 397.9L472.9 397.0L468.1 395.9L463.3 394.8L458.6 394.2L453.8 393.6L449.0 393.1L444.3 392.8L444.3 392.8L449.0 395.1L453.8 397.1L458.6 399.0L463.3 400.7L468.1 401.7L472.9 402.7L477.6 403.5L482.4 404.3L487.2 404.9L491.9 405.4L496.7 405.8L501.5 406.0L506.2 406.0L511.0 405.8L515.8 405.4L520.5 404.7L525.3 403.8L530.1 402.7L534.8 401.2L539.6 398.9ZM539.6 401.4L535.1 403.2L530.5 404.3L525.9 405.1L521.3 405.6L516.8 406.0L512.2 406.2L507.6 406.1L503.0 406.0L498.5 405.7L493.9 405.2L489.3 404.6L484.8 403.9L480.2 403.2L475.6 402.3L471.0 401.3L466.5 400.3L461.9 399.8L457.3 399.3L452.7 398.9L448.2 398.7L448.2 398.7L452.7 400.9L457.3 402.7L461.9 404.5L466.5 406.1L471.0 407.0L475.6 407.9L480.2 408.7L484.8 409.4L489.3 410.0L493.9 410.4L498.5 410.7L503.0 410.8L507.6 410.8L512.2 410.6L516.8 410.1L521.3 409.5L525.9 408.6L530.5 407.4L535.1 405.9L539.6 403.6ZM539.7 406.1L535.2 408.0L530.7 409.1L526.2 410.0L521.8 410.5L517.3 410.9L512.8 411.1L508.3 411.2L503.8 411.0L499.3 410.8L494.8 410.4L490.3 409.8L485.8 409.2L481.3 408.5L476.9 407.7L472.4 406.8L467.9 405.8L463.4 405.3L458.9 404.9L454.4 404.5L449.9 404.3L449.9 404.3L454.4 406.2L458.9 408.0L463.4 409.6L467.9 411.0L472.4 411.9L476.9 412.8L481.3 413.5L485.8 414.2L490.3 414.7L494.8 415.1L499.3 415.4L503.8 415.5L508.3 415.4L512.8 415.2L517.3 414.8L521.8 414.1L526.2 413.3L530.7 412.1L535.2 410.6L539.7 408.4ZM539.8 410.9L535.3 412.8L530.9 413.9L526.4 414.7L522.0 415.3L517.5 415.7L513.0 415.9L508.6 415.9L504.1 415.8L499.7 415.6L495.2 415.2L490.8 414.7L486.3 414.1L481.9 413.5L477.4 412.7L473.0 411.9L468.5 411.0L464.0 410.5L459.6 410.2L455.1 409.9L450.7 409.7L450.7 409.7L455.1 411.6L459.6 413.2L464.0 414.8L468.5 416.2L473.0 417.0L477.4 417.8L481.9 418.5L486.3 419.1L490.8 419.7L495.2 420.0L499.7 420.3L504.1 420.4L508.6 420.3L513.0 420.0L517.5 419.6L522.0 418.9L526.4 418.0L530.9 416.9L535.3 415.4L539.8 413.1ZM539.9 415.6L535.4 417.5L530.9 418.7L526.5 419.5L522.0 420.1L517.6 420.5L513.1 420.7L508.6 420.8L504.2 420.7L499.7 420.5L495.3 420.2L490.8 419.7L486.3 419.1L481.9 418.5L477.4 417.8L473.0 417.0L468.5 416.1L464.0 415.6L459.6 415.3L455.1 414.9L450.7 414.8L450.7 414.8L455.1 416.5L459.6 418.1L464.0 419.6L468.5 420.9L473.0 421.7L477.4 422.5L481.9 423.2L486.3 423.8L490.8 424.3L495.3 424.7L499.7 425.0L504.2 425.0L508.6 425.0L513.1 424.7L517.6 424.3L522.0 423.6L526.5 422.7L530.9 421.6L535.4 420.1L539.9 417.9ZM539.9 420.4L535.4 422.2L530.9 423.3L526.4 424.1L522.0 424.7L517.5 425.1L513.0 425.3L508.5 425.4L504.0 425.3L499.5 425.1L495.0 424.7L490.5 424.3L486.0 423.7L481.5 423.0L477.0 422.3L472.5 421.5L468.0 420.7L463.6 420.2L459.1 419.9L454.6 419.6L450.1 419.5L450.1 419.5L454.6 421.3L459.1 423.0L463.6 424.5L468.0 425.8L472.5 426.7L477.0 427.5L481.5 428.2L486.0 428.8L490.5 429.3L495.0 429.7L499.5 429.9L504.0 430.0L508.5 429.9L513.0 429.6L517.5 429.2L522.0 428.5L526.4 427.6L530.9 426.4L535.4 424.9L539.9 422.6ZM540.0 425.1L535.5 427.0L530.9 428.1L526.4 428.9L521.9 429.5L517.4 429.9L512.8 430.1L508.3 430.2L503.8 430.1L499.3 429.9L494.7 429.6L490.2 429.1L485.7 428.6L481.2 428.0L476.6 427.3L472.1 426.5L467.6 425.7L463.1 425.1L458.5 424.8L454.0 424.5L449.5 424.2L449.5 424.2L454.0 426.0L458.5 427.6L463.1 429.1L467.6 430.3L472.1 431.2L476.6 432.0L481.2 432.7L485.7 433.4L490.2 433.9L494.7 434.3L499.3 434.5L503.8 434.6L508.3 434.6L512.8 434.3L517.4 433.9L521.9 433.2L526.4 432.3L530.9 431.1L535.5 429.7L540.0 427.4ZM540.1 429.9L535.4 431.9L530.8 433.0L526.1 433.8L521.5 434.4L516.8 434.8L512.2 435.0L507.5 435.1L502.9 435.0L498.2 434.7L493.6 434.4L488.9 433.9L484.3 433.3L479.7 432.6L475.0 431.8L470.4 431.0L465.7 430.1L461.1 429.6L456.4 429.2L451.8 428.7L447.1 428.4L447.1 428.4L451.8 430.2L456.4 431.9L461.1 433.6L465.7 435.1L470.4 436.1L475.0 437.0L479.7 437.9L484.3 438.6L488.9 439.2L493.6 439.7L498.2 440.0L502.9 440.1L507.5 440.0L512.2 439.8L516.8 439.3L521.5 438.5L526.1 437.6L530.8 436.3L535.4 434.6L540.1 432.1ZM540.1 434.6L535.4 436.8L530.6 438.1L525.8 439.1L521.0 439.7L516.2 440.2L511.4 440.4L506.6 440.5L501.8 440.4L497.1 440.1L492.3 439.7L487.5 439.2L482.7 438.5L477.9 437.7L473.1 436.9L468.3 435.9L463.6 434.9L458.8 434.3L454.0 433.7L449.2 433.0L444.4 432.4L444.4 432.4L449.2 434.3L454.0 436.1L458.8 437.8L463.6 439.4L468.3 440.6L473.1 441.6L477.9 442.6L482.7 443.4L487.5 444.1L492.3 444.6L497.1 445.0L501.8 445.2L506.6 445.1L511.4 444.9L516.2 444.4L521.0 443.6L525.8 442.6L530.6 441.3L535.4 439.5L540.1 436.9ZM540.2 439.4L535.3 441.7L530.4 443.1L525.4 444.1L520.5 444.8L515.6 445.3L510.7 445.6L505.7 445.6L500.8 445.5L495.9 445.2L491.0 444.7L486.0 444.1L481.1 443.3L476.2 442.5L471.2 441.5L466.3 440.5L461.4 439.4L456.5 438.7L451.5 437.9L446.6 437.1L441.7 436.4L441.7 436.4L446.6 438.5L451.5 440.4L456.5 442.3L461.4 444.1L466.3 445.4L471.2 446.5L476.2 447.6L481.1 448.5L486.0 449.2L491.0 449.8L495.9 450.2L500.8 450.4L505.7 450.4L510.7 450.1L515.6 449.6L520.5 448.8L525.4 447.7L530.4 446.3L535.3 444.5L540.2 441.6ZM540.4 444.1L535.3 446.5L530.2 448.0L525.1 449.0L520.1 449.8L515.0 450.3L509.9 450.5L504.8 450.6L499.7 450.4L494.6 450.1L489.5 449.6L484.5 449.0L479.4 448.2L474.3 447.3L469.2 446.3L464.1 445.2L459.0 444.1L453.9 443.3L448.8 442.4L443.8 441.5L438.7 440.7L438.7 440.7L443.8 442.7L448.8 444.6L453.9 446.5L459.0 448.2L464.1 449.6L469.2 450.8L474.3 451.9L479.4 452.8L484.5 453.6L489.5 454.2L494.6 454.6L499.7 454.8L504.8 454.8L509.9 454.6L515.0 454.1L520.1 453.4L525.1 452.4L530.2 451.0L535.3 449.2L540.4 446.4ZM540.6 448.9L535.4 451.3L530.1 452.6L524.9 453.7L519.6 454.4L514.4 454.9L509.1 455.1L503.9 455.2L498.6 455.0L493.4 454.6L488.1 454.1L482.9 453.5L477.6 452.7L472.4 451.7L467.1 450.7L461.9 449.5L456.7 448.5L451.4 447.6L446.2 446.7L440.9 445.8L435.7 444.9L435.7 444.9L440.9 447.0L446.2 449.0L451.4 450.9L456.7 452.7L461.9 454.3L467.1 455.5L472.4 456.6L477.6 457.5L482.9 458.3L488.1 459.0L493.4 459.4L498.6 459.7L503.9 459.7L509.1 459.5L514.4 459.0L519.6 458.2L524.9 457.2L530.1 455.8L535.4 454.0L540.6 451.1ZM540.8 453.6L535.4 456.0L530.0 457.3L524.6 458.3L519.2 459.0L513.8 459.5L508.4 459.7L502.9 459.7L497.5 459.5L492.1 459.1L486.7 458.6L481.3 457.9L475.9 457.1L470.5 456.1L465.1 455.1L459.7 453.9L454.3 452.8L448.9 452.0L443.5 451.0L438.1 450.1L432.7 449.2L432.7 449.2L438.1 451.4L443.5 453.4L448.9 455.4L454.3 457.3L459.7 458.8L465.1 460.1L470.5 461.2L475.9 462.2L481.3 463.1L486.7 463.8L492.1 464.2L497.5 464.5L502.9 464.5L508.4 464.3L513.8 463.8L519.2 463.1L524.6 462.0L530.0 460.6L535.4 458.7L540.8 455.9ZM541.0 458.4L535.5 460.8L529.9 462.3L524.4 463.3L518.9 464.0L513.4 464.5L507.8 464.7L502.3 464.7L496.8 464.5L491.3 464.1L485.7 463.6L480.2 462.9L474.7 462.0L469.2 461.0L463.7 459.8L458.1 458.6L452.6 457.4L447.1 456.4L441.6 455.4L436.0 454.4L430.5 453.4L430.5 453.4L436.0 455.7L441.6 457.8L447.1 459.9L452.6 461.9L458.1 463.6L463.7 464.9L469.2 466.1L474.7 467.2L480.2 468.1L485.7 468.9L491.3 469.4L496.8 469.7L502.3 469.7L507.8 469.5L513.4 469.0L518.9 468.2L524.4 467.1L529.9 465.6L535.5 463.6L541.0 460.6ZM541.2 463.1L535.5 465.7L529.9 467.3L524.3 468.4L518.6 469.2L513.0 469.7L507.3 469.9L501.7 469.9L496.1 469.7L490.4 469.3L484.8 468.7L479.2 467.9L473.5 467.0L467.9 465.9L462.2 464.7L456.6 463.4L451.0 462.0L445.3 461.0L439.7 459.8L434.1 458.7L428.4 457.6L428.4 457.6L434.1 460.0L439.7 462.2L445.3 464.4L451.0 466.5L456.6 468.2L462.2 469.6L467.9 470.9L473.5 472.1L479.2 473.1L484.8 473.9L490.4 474.4L496.1 474.7L501.7 474.8L507.3 474.6L513.0 474.1L518.6 473.3L524.3 472.1L529.9 470.5L535.5 468.5L541.2 465.4ZM541.6 467.9L535.8 470.6L530.0 472.3L524.3 473.4L518.5 474.3L512.8 474.8L507.0 475.1L501.2 475.1L495.5 474.9L489.7 474.4L483.9 473.8L478.2 472.9L472.4 472.0L466.7 470.8L460.9 469.5L455.1 468.0L449.4 466.6L443.6 465.4L437.8 464.2L432.1 462.9L426.3 461.8L426.3 461.8L432.1 464.3L437.8 466.7L443.6 469.0L449.4 471.2L455.1 472.9L460.9 474.4L466.7 475.8L472.4 477.0L478.2 478.1L483.9 478.9L489.7 479.5L495.5 479.8L501.2 479.9L507.0 479.7L512.8 479.2L518.5 478.4L524.3 477.1L530.0 475.5L535.8 473.4L541.6 470.1ZM542.0 472.6L536.2 475.4L530.3 477.0L524.4 478.2L518.6 479.1L512.7 479.6L506.8 479.9L501.0 479.9L495.1 479.6L489.2 479.2L483.4 478.5L477.5 477.7L471.7 476.6L465.8 475.4L459.9 474.1L454.1 472.6L448.2 471.0L442.3 469.8L436.5 468.5L430.6 467.2L424.8 466.0L424.8 466.0L430.6 468.7L436.5 471.1L442.3 473.5L448.2 475.8L454.1 477.4L459.9 479.0L465.8 480.4L471.7 481.6L477.5 482.6L483.4 483.5L489.2 484.1L495.1 484.5L501.0 484.6L506.8 484.4L512.7 483.9L518.6 483.1L524.4 481.9L530.3 480.3L536.2 478.2L542.0 474.9ZM542.5 477.4L536.5 480.1L530.6 481.8L524.7 483.0L518.8 483.8L512.9 484.3L506.9 484.6L501.0 484.6L495.1 484.3L489.2 483.9L483.3 483.2L477.3 482.3L471.4 481.3L465.5 480.0L459.6 478.7L453.7 477.1L447.7 475.5L441.8 474.3L435.9 473.0L430.0 471.7L424.1 470.5L424.1 470.5L430.0 473.2L435.9 475.6L441.8 478.0L447.7 480.3L453.7 481.9L459.6 483.5L465.5 484.8L471.4 486.1L477.3 487.1L483.3 488.0L489.2 488.6L495.1 489.0L501.0 489.1L506.9 488.9L512.9 488.5L518.8 487.7L524.7 486.5L530.6 484.9L536.5 482.9L542.5 479.6ZM543.2 482.1L537.3 484.9L531.3 486.5L525.3 487.6L519.3 488.5L513.3 489.0L507.3 489.2L501.3 489.2L495.3 489.0L489.3 488.5L483.3 487.8L477.3 486.9L471.3 485.8L465.3 484.6L459.4 483.2L453.4 481.7L447.4 480.0L441.4 478.8L435.4 477.5L429.4 476.2L423.4 474.9L423.4 474.9L429.4 477.6L435.4 480.1L441.4 482.5L447.4 484.7L453.4 486.4L459.4 487.9L465.3 489.3L471.3 490.5L477.3 491.6L483.3 492.5L489.3 493.1L495.3 493.5L501.3 493.6L507.3 493.5L513.3 493.0L519.3 492.2L525.3 491.1L531.3 489.6L537.3 487.5L543.2 484.4ZM544.2 486.9L538.2 489.5L532.1 491.1L526.1 492.2L520.1 493.0L514.0 493.6L508.0 493.8L502.0 493.8L495.9 493.5L489.9 493.0L483.9 492.3L477.8 491.4L471.8 490.4L465.7 489.1L459.7 487.7L453.7 486.2L447.6 484.5L441.6 483.3L435.6 482.1L429.5 480.8L423.5 479.7L423.5 479.7L429.5 482.4L435.6 484.9L441.6 487.3L447.6 489.5L453.7 491.1L459.7 492.6L465.7 494.0L471.8 495.2L477.8 496.2L483.9 497.0L489.9 497.7L495.9 498.0L502.0 498.2L508.0 498.0L514.0 497.6L520.1 496.8L526.1 495.7L532.1 494.2L538.2 492.2L544.2 489.1ZM545.5 491.6L539.5 494.3L533.4 495.9L527.4 497.0L521.4 497.7L515.3 498.2L509.3 498.4L503.2 498.4L497.2 498.2L491.1 497.7L485.1 497.0L479.1 496.2L473.0 495.2L467.0 494.0L460.9 492.6L454.9 491.1L448.9 489.6L442.8 488.4L436.8 487.2L430.7 486.0L424.7 484.9L424.7 484.9L430.7 487.6L436.8 490.1L442.8 492.5L448.9 494.6L454.9 496.1L460.9 497.5L467.0 498.8L473.0 499.9L479.1 500.8L485.1 501.6L491.1 502.2L497.2 502.5L503.2 502.7L509.3 502.5L515.3 502.1L521.4 501.4L527.4 500.4L533.4 499.0L539.5 497.1L545.5 493.9ZM547.1 496.4L541.0 499.2L535.0 500.6L528.9 501.6L522.9 502.3L516.8 502.7L510.7 502.9L504.7 502.9L498.6 502.6L492.5 502.2L486.5 501.6L480.4 500.8L474.4 499.8L468.3 498.7L462.2 497.4L456.2 496.1L450.1 494.6L444.1 493.5L438.0 492.4L431.9 491.3L425.9 490.1L425.9 490.1L431.9 493.0L438.0 495.4L444.1 497.7L450.1 499.8L456.2 501.2L462.2 502.5L468.3 503.7L474.4 504.7L480.4 505.6L486.5 506.3L492.5 506.8L498.6 507.1L504.7 507.2L510.7 507.1L516.8 506.7L522.9 506.1L528.9 505.1L535.0 503.8L541.0 502.0L547.1 498.6ZM548.7 501.2L542.8 504.1L536.8 505.5L530.8 506.4L524.9 507.0L518.9 507.4L512.9 507.5L507.0 507.5L501.0 507.2L495.0 506.8L489.1 506.3L483.1 505.5L477.2 504.7L471.2 503.7L465.2 502.5L459.3 501.2L453.3 499.8L447.3 498.9L441.4 498.0L435.4 496.9L429.5 495.6L429.5 495.6L435.4 498.6L441.4 501.1L447.3 503.3L453.3 505.4L459.3 506.7L465.2 507.9L471.2 508.9L477.2 509.9L483.1 510.7L489.1 511.3L495.0 511.7L501.0 512.0L507.0 512.1L512.9 512.0L518.9 511.6L524.9 511.0L530.8 510.1L536.8 508.8L542.8 507.0L548.7 503.3ZM550.9 505.9L545.0 509.3L539.2 510.6L533.3 511.5L527.4 512.1L521.5 512.5L515.7 512.6L509.8 512.6L503.9 512.3L498.0 512.0L492.2 511.4L486.3 510.8L480.4 510.0L474.5 509.0L468.7 508.0L462.8 506.8L456.9 505.5L451.0 504.7L445.2 503.7L439.3 502.7L433.4 501.2L433.4 501.2L439.3 504.4L445.2 506.9L451.0 509.1L456.9 511.1L462.8 512.4L468.7 513.5L474.5 514.5L480.4 515.3L486.3 516.1L492.2 516.6L498.0 517.0L503.9 517.3L509.8 517.3L515.7 517.2L521.5 516.8L527.4 516.2L533.3 515.3L539.2 514.0L545.0 512.2L550.9 508.1ZM553.1 510.7L547.3 514.5L541.6 515.9L535.8 516.7L530.0 517.3L524.3 517.6L518.5 517.7L512.7 517.6L507.0 517.4L501.2 517.0L495.4 516.4L489.7 515.8L483.9 515.0L478.1 514.0L472.4 513.0L466.6 511.8L460.8 510.4L455.1 509.7L449.3 509.0L443.5 508.1L437.8 506.7L437.8 506.7L443.5 510.6L449.3 513.4L455.1 515.7L460.8 517.6L466.6 518.7L472.4 519.7L478.1 520.5L483.9 521.3L489.7 521.9L495.4 522.3L501.2 522.6L507.0 522.8L512.7 522.7L518.5 522.5L524.3 522.1L530.0 521.5L535.8 520.6L541.6 519.3L547.3 517.5L553.1 512.8ZM555.5 515.4L550.0 519.7L544.4 521.1L538.9 521.9L533.4 522.5L527.9 522.8L522.4 523.0L516.9 523.0L511.3 522.9L505.8 522.7L500.3 522.3L494.8 521.8L489.3 521.3L483.7 520.6L478.2 519.8L472.7 518.9L467.2 517.9L461.7 517.4L456.2 517.2L450.6 516.9L445.1 515.6L445.1 515.6L450.6 519.6L456.2 522.0L461.7 524.0L467.2 525.4L472.7 526.1L478.2 526.6L483.7 527.0L489.3 527.4L494.8 527.7L500.3 527.8L505.8 527.9L511.3 527.9L516.9 527.7L522.4 527.4L527.9 526.9L533.4 526.3L538.9 525.4L544.4 524.2L550.0 522.5L555.5 517.6ZM558.2 520.2L553.0 524.7L547.8 525.9L542.6 526.7L537.3 527.2L532.1 527.6L526.9 527.8L521.6 527.9L516.4 527.9L511.2 527.8L506.0 527.6L500.7 527.3L495.5 527.0L490.3 526.6L485.0 526.1L479.8 525.6L474.6 524.9L469.4 524.7L464.1 524.9L458.9 525.1L453.7 524.0L453.7 524.0L458.9 528.0L464.1 530.1L469.4 531.7L474.6 532.6L479.8 532.8L485.0 533.0L490.3 533.1L495.5 533.2L500.7 533.1L506.0 533.1L511.2 532.9L516.4 532.7L521.6 532.5L526.9 532.1L532.1 531.6L537.3 530.9L542.6 530.1L547.8 529.0L553.0 527.4L558.2 522.3Z" fill="url(#fg)"/>
<path d="M541.4 184.9L542.2 185.5L543.0 186.0L543.8 186.4L544.6 186.7L545.4 187.0L546.2 187.2L547.0 187.3L547.8 187.4L548.6 187.4L549.5 187.4L550.3 187.3L551.1 186.9L551.9 186.4L552.7 185.9L553.5 185.3L554.3 184.7L555.1 184.1L555.9 183.5L556.7 182.8L557.5 182.0L557.5 182.0L556.7 181.9L555.9 181.8L555.1 181.8L554.3 181.8L553.5 181.7L552.7 181.7L551.9 181.6L551.1 181.5L550.3 181.5L549.5 181.7L548.6 181.9L547.8 182.1L547.0 182.3L546.2 182.4L545.4 182.6L544.6 182.8L543.8 182.9L543.0 183.0L542.2 183.1L541.4 183.1ZM541.3 189.6L542.5 190.4L543.7 191.1L544.9 191.6L546.1 192.0L547.3 192.4L548.4 192.6L549.6 192.8L550.8 192.9L552.0 192.9L553.2 192.9L554.4 192.8L555.5 192.4L556.7 191.9L557.9 191.3L559.1 190.8L560.3 190.2L561.5 189.5L562.7 188.9L563.8 188.2L565.0 187.4L565.0 187.4L563.8 187.3L562.7 187.3L561.5 187.3L560.3 187.3L559.1 187.3L557.9 187.3L556.7 187.3L555.5 187.3L554.4 187.2L553.2 187.4L552.0 187.6L550.8 187.8L549.6 188.0L548.4 188.1L547.3 188.2L546.1 188.3L544.9 188.3L543.7 188.3L542.5 188.2L541.3 187.9ZM541.3 194.2L542.7 195.3L544.2 196.1L545.6 196.7L547.1 197.2L548.5 197.6L549.9 197.9L551.4 198.1L552.8 198.3L554.3 198.3L555.7 198.3L557.2 198.2L558.6 198.0L560.0 197.7L561.5 197.1L562.9 196.5L564.4 195.8L565.8 195.1L567.3 194.4L568.7 193.6L570.1 192.7L570.1 192.7L568.7 192.6L567.3 192.5L565.8 192.5L564.4 192.4L562.9 192.4L561.5 192.3L560.0 192.3L558.6 192.4L557.2 192.6L555.7 192.9L554.3 193.1L552.8 193.2L551.4 193.4L549.9 193.5L548.5 193.5L547.1 193.5L545.6 193.5L544.2 193.4L542.7 193.2L541.3 192.8ZM541.2 198.9L542.9 200.2L544.5 201.0L546.2 201.7L547.9 202.3L549.5 202.7L551.2 203.0L552.8 203.3L554.5 203.4L556.2 203.5L557.8 203.5L559.5 203.4L561.1 203.2L562.8 203.0L564.5 202.7L566.1 202.0L567.8 201.3L569.4 200.6L571.1 199.8L572.8 199.0L574.4 198.0L574.4 198.0L572.8 197.8L571.1 197.7L569.4 197.6L567.8 197.5L566.1 197.5L564.5 197.4L562.8 197.6L561.1 197.9L559.5 198.1L557.8 198.3L556.2 198.5L554.5 198.7L552.8 198.8L551.2 198.8L549.5 198.8L547.9 198.8L546.2 198.7L544.5 198.5L542.9 198.2L541.2 197.6ZM541.2 203.7L543.1 205.0L545.0 205.9L546.9 206.7L548.8 207.3L550.7 207.8L552.6 208.2L554.6 208.5L556.5 208.7L558.4 208.8L560.3 208.8L562.2 208.7L564.1 208.5L566.0 208.3L568.0 208.1L569.9 207.7L571.8 206.9L573.7 206.1L575.6 205.2L577.5 204.3L579.5 203.3L579.5 203.3L577.5 202.9L575.6 202.7L573.7 202.6L571.8 202.4L569.9 202.3L568.0 202.5L566.0 202.8L564.1 203.0L562.2 203.2L560.3 203.5L558.4 203.6L556.5 203.8L554.6 203.9L552.6 203.9L550.7 203.9L548.8 203.8L546.9 203.7L545.0 203.4L543.1 203.1L541.2 202.3ZM541.1 208.4L543.3 209.8L545.5 210.8L547.7 211.6L549.9 212.2L552.1 212.7L554.2 213.1L556.4 213.4L558.6 213.6L560.8 213.6L563.0 213.6L565.2 213.6L567.4 213.4L569.6 213.2L571.8 213.0L574.0 212.7L576.2 212.2L578.3 211.3L580.5 210.5L582.7 209.6L584.9 208.5L584.9 208.5L582.7 208.1L580.5 207.9L578.3 207.7L576.2 207.5L574.0 207.6L571.8 207.9L569.6 208.2L567.4 208.4L565.2 208.6L563.0 208.8L560.8 209.0L558.6 209.1L556.4 209.1L554.2 209.1L552.1 209.1L549.9 208.9L547.7 208.7L545.5 208.4L543.3 207.9L541.1 207.1ZM541.1 213.2L543.5 214.7L546.0 215.7L548.4 216.5L550.9 217.2L553.3 217.7L555.8 218.1L558.2 218.4L560.7 218.6L563.1 218.7L565.6 218.7L568.0 218.7L570.5 218.5L573.0 218.3L575.4 218.1L577.9 217.8L580.3 217.5L582.8 216.7L585.2 215.8L587.7 214.8L590.1 213.7L590.1 213.7L587.7 213.2L585.2 212.9L582.8 212.6L580.3 212.4L577.9 212.7L575.4 213.0L573.0 213.3L570.5 213.5L568.0 213.8L565.6 213.9L563.1 214.1L560.7 214.2L558.2 214.2L555.8 214.2L553.3 214.1L550.9 213.9L548.4 213.7L546.0 213.3L543.5 212.8L541.1 211.8ZM541.0 217.9L543.7 219.5L546.4 220.7L549.1 221.6L551.8 222.3L554.5 222.9L557.2 223.3L559.9 223.7L562.7 223.9L565.4 224.0L568.1 224.0L570.8 224.0L573.5 223.8L576.2 223.6L578.9 223.4L581.6 223.1L584.3 222.8L587.0 222.1L589.7 221.1L592.4 220.0L595.2 218.7L595.2 218.7L592.4 218.1L589.7 217.7L587.0 217.3L584.3 217.3L581.6 217.6L578.9 217.9L576.2 218.2L573.5 218.4L570.8 218.6L568.1 218.8L565.4 219.0L562.7 219.1L559.9 219.1L557.2 219.1L554.5 219.0L551.8 218.8L549.1 218.5L546.4 218.1L543.7 217.6L541.0 216.6ZM540.9 222.7L543.9 224.4L546.9 225.5L549.9 226.5L552.9 227.3L555.9 227.9L558.9 228.3L561.8 228.7L564.8 228.9L567.8 229.0L570.8 229.1L573.8 229.0L576.8 228.8L579.8 228.6L582.7 228.4L585.7 228.1L588.7 227.7L591.7 227.3L594.7 226.2L597.7 225.1L600.7 223.7L600.7 223.7L597.7 223.0L594.7 222.6L591.7 222.1L588.7 222.4L585.7 222.7L582.7 223.0L579.8 223.3L576.8 223.5L573.8 223.8L570.8 224.0L567.8 224.1L564.8 224.2L561.8 224.2L558.9 224.2L555.9 224.0L552.9 223.8L549.9 223.5L546.9 223.1L543.9 222.4L540.9 221.3ZM540.9 227.4L544.2 229.2L547.4 230.4L550.7 231.4L554.0 232.2L557.3 232.9L560.6 233.4L563.8 233.7L567.1 234.0L570.4 234.1L573.7 234.1L577.0 234.0L580.2 233.8L583.5 233.6L586.8 233.3L590.1 232.9L593.4 232.5L596.6 232.2L599.9 231.1L603.2 230.0L606.5 228.7L606.5 228.7L603.2 228.1L599.9 227.7L596.6 227.3L593.4 227.6L590.1 227.9L586.8 228.2L583.5 228.5L580.2 228.7L577.0 228.9L573.7 229.1L570.4 229.2L567.1 229.3L563.8 229.3L560.6 229.2L557.3 229.1L554.0 228.8L550.7 228.5L547.4 228.0L544.2 227.3L540.9 226.1ZM540.8 232.2L544.5 234.3L548.1 235.7L551.8 236.8L555.4 237.7L559.1 238.5L562.7 239.0L566.4 239.4L570.0 239.6L573.7 239.7L577.3 239.6L581.0 239.5L584.6 239.2L588.3 238.8L591.9 238.4L595.6 237.9L599.2 237.3L602.9 236.4L606.5 235.3L610.2 234.1L613.8 232.9L613.8 232.9L610.2 232.7L606.5 232.6L602.9 232.4L599.2 232.5L595.6 232.8L591.9 233.2L588.3 233.6L584.6 233.9L581.0 234.1L577.3 234.3L573.7 234.5L570.0 234.6L566.4 234.6L562.7 234.6L559.1 234.4L555.4 234.1L551.8 233.7L548.1 233.1L544.5 232.3L540.8 230.8ZM540.8 236.9L544.8 239.3L548.9 240.8L552.9 242.1L557.0 243.1L561.0 243.9L565.1 244.4L569.1 244.8L573.2 245.0L577.2 245.0L581.3 244.9L585.3 244.6L589.4 244.2L593.4 243.7L597.5 243.1L601.5 242.5L605.6 241.6L609.6 240.5L613.7 239.3L617.7 238.1L621.8 236.9L621.8 236.9L617.7 237.0L613.7 237.2L609.6 237.3L605.6 237.5L601.5 237.9L597.5 238.4L593.4 238.8L589.4 239.2L585.3 239.6L581.3 239.9L577.2 240.1L573.2 240.2L569.1 240.2L565.1 240.1L561.0 239.9L557.0 239.6L552.9 239.0L548.9 238.3L544.8 237.3L540.8 235.6ZM540.7 241.7L545.0 244.3L549.4 246.1L553.7 247.5L558.0 248.6L562.3 249.4L566.7 250.0L571.0 250.3L575.3 250.5L579.6 250.4L584.0 250.2L588.3 249.8L592.6 249.2L596.9 248.5L601.3 247.7L605.6 246.8L609.9 245.6L614.2 244.2L618.6 242.8L622.9 241.4L627.2 239.9L627.2 239.9L622.9 240.4L618.6 240.9L614.2 241.4L609.9 241.8L605.6 242.2L601.3 242.9L596.9 243.5L592.6 244.1L588.3 244.6L584.0 245.0L579.6 245.3L575.3 245.5L571.0 245.5L566.7 245.5L562.3 245.2L558.0 244.9L553.7 244.3L549.4 243.5L545.0 242.3L540.7 240.3ZM540.7 246.4L545.2 249.3L549.8 251.2L554.4 252.7L559.0 253.8L563.5 254.7L568.1 255.3L572.7 255.6L577.3 255.7L581.9 255.5L586.4 255.2L591.0 254.6L595.6 253.9L600.2 253.1L604.8 252.1L609.3 251.0L613.9 249.7L618.5 248.0L623.1 246.3L627.7 244.6L632.2 242.8L632.2 242.8L627.7 243.6L623.1 244.3L618.5 245.0L613.9 245.7L609.3 246.5L604.8 247.4L600.2 248.3L595.6 249.1L591.0 249.7L586.4 250.3L581.9 250.7L577.3 251.0L572.7 251.1L568.1 251.0L563.5 250.8L559.0 250.3L554.4 249.7L549.8 248.7L545.2 247.4L540.7 245.1ZM540.6 251.2L545.2 254.0L549.9 255.9L554.5 257.3L559.2 258.4L563.8 259.2L568.5 259.7L573.1 260.0L577.8 260.0L582.4 259.8L587.0 259.5L591.7 258.9L596.3 258.2L601.0 257.3L605.6 256.3L610.3 255.2L614.9 253.7L619.6 252.1L624.2 250.3L628.8 248.5L633.5 246.7L633.5 246.7L628.8 247.5L624.2 248.4L619.6 249.2L614.9 250.0L610.3 250.9L605.6 252.0L601.0 252.9L596.3 253.8L591.7 254.5L587.0 255.2L582.4 255.6L577.8 255.9L573.1 256.1L568.5 256.0L563.8 255.8L559.2 255.3L554.5 254.6L549.9 253.6L545.2 252.2L540.6 249.8ZM540.5 255.9L545.2 258.8L549.9 260.6L554.6 262.0L559.3 263.1L564.0 263.9L568.7 264.4L573.4 264.6L578.1 264.7L582.8 264.4L587.5 264.0L592.2 263.4L596.9 262.6L601.6 261.7L606.3 260.6L611.0 259.4L615.7 257.9L620.4 256.2L625.1 254.4L629.8 252.5L634.5 250.5L634.5 250.5L629.8 251.4L625.1 252.4L620.4 253.4L615.7 254.2L611.0 255.2L606.3 256.3L601.6 257.3L596.9 258.3L592.2 259.1L587.5 259.7L582.8 260.2L578.1 260.6L573.4 260.8L568.7 260.7L564.0 260.5L559.3 260.0L554.6 259.3L549.9 258.3L545.2 256.9L540.5 254.6ZM540.5 260.7L545.2 263.6L550.0 265.4L554.7 266.9L559.5 267.9L564.3 268.7L569.0 269.2L573.8 269.5L578.5 269.5L583.3 269.2L588.0 268.8L592.8 268.1L597.5 267.3L602.3 266.3L607.0 265.2L611.8 263.9L616.5 262.2L621.3 260.4L626.1 258.5L630.8 256.5L635.6 254.4L635.6 254.4L630.8 255.4L626.1 256.4L621.3 257.4L616.5 258.3L611.8 259.3L607.0 260.5L602.3 261.5L597.5 262.5L592.8 263.4L588.0 264.1L583.3 264.6L578.5 265.0L573.8 265.3L569.0 265.3L564.3 265.1L559.5 264.6L554.7 264.0L550.0 263.0L545.2 261.6L540.5 259.3ZM540.4 265.4L545.2 268.3L550.0 270.2L554.9 271.6L559.7 272.7L564.5 273.4L569.3 273.9L574.1 274.1L578.9 274.1L583.7 273.8L588.5 273.3L593.3 272.6L598.1 271.8L602.9 270.7L607.8 269.5L612.6 268.2L617.4 266.5L622.2 264.6L627.0 262.6L631.8 260.5L636.6 258.3L636.6 258.3L631.8 259.4L627.0 260.5L622.2 261.6L617.4 262.6L612.6 263.6L607.8 264.8L602.9 266.0L598.1 267.0L593.3 267.9L588.5 268.6L583.7 269.2L578.9 269.7L574.1 269.9L569.3 270.0L564.5 269.8L559.7 269.4L554.9 268.7L550.0 267.7L545.2 266.4L540.4 264.1ZM540.4 270.2L545.2 273.0L550.1 274.9L555.0 276.3L559.8 277.3L564.7 278.1L569.6 278.5L574.4 278.7L579.3 278.7L584.2 278.3L589.0 277.8L593.9 277.1L598.7 276.2L603.6 275.1L608.5 273.8L613.3 272.5L618.2 270.6L623.1 268.7L627.9 266.6L632.8 264.5L637.7 262.2L637.7 262.2L632.8 263.4L627.9 264.7L623.1 265.8L618.2 266.9L613.3 268.0L608.5 269.3L603.6 270.5L598.7 271.6L593.9 272.5L589.0 273.3L584.2 274.0L579.3 274.4L574.4 274.7L569.6 274.7L564.7 274.6L559.8 274.2L555.0 273.5L550.1 272.5L545.2 271.2L540.4 268.8ZM540.3 274.9L545.2 277.8L550.2 279.6L555.1 281.0L560.0 282.1L564.9 282.8L569.8 283.2L574.8 283.4L579.7 283.3L584.6 283.0L589.5 282.4L594.4 281.6L599.4 280.7L604.3 279.5L609.2 278.2L614.1 276.8L619.0 274.9L624.0 272.9L628.9 270.8L633.8 268.6L638.7 266.2L638.7 266.2L633.8 267.5L628.9 268.8L624.0 270.0L619.0 271.2L614.1 272.3L609.2 273.7L604.3 275.0L599.4 276.1L594.4 277.1L589.5 277.9L584.6 278.6L579.7 279.1L574.8 279.3L569.8 279.4L564.9 279.3L560.0 278.9L555.1 278.2L550.2 277.3L545.2 275.9L540.3 273.6ZM540.3 279.7L545.2 282.5L550.2 284.4L555.2 285.8L560.2 286.8L565.1 287.5L570.1 287.9L575.1 288.1L580.1 287.9L585.0 287.6L590.0 287.0L595.0 286.1L600.0 285.1L604.9 283.9L609.9 282.6L614.9 281.1L619.9 279.2L624.8 277.1L629.8 274.9L634.8 272.6L639.8 270.2L639.8 270.2L634.8 271.5L629.8 272.9L624.8 274.2L619.9 275.5L614.9 276.7L609.9 278.1L604.9 279.4L600.0 280.6L595.0 281.6L590.0 282.5L585.0 283.2L580.1 283.7L575.1 284.0L570.1 284.1L565.1 284.0L560.2 283.6L555.2 282.9L550.2 282.0L545.2 280.7L540.3 278.3ZM540.2 284.4L545.2 287.3L550.3 289.2L555.3 290.6L560.3 291.6L565.3 292.3L570.4 292.7L575.4 292.8L580.4 292.7L585.4 292.2L590.5 291.6L595.5 290.7L600.5 289.6L605.6 288.4L610.6 286.9L615.6 285.3L620.6 283.3L625.7 281.1L630.7 278.8L635.7 276.4L640.8 273.9L640.8 273.9L635.7 275.3L630.7 276.8L625.7 278.2L620.6 279.5L615.6 280.8L610.6 282.3L605.6 283.7L600.5 284.9L595.5 286.0L590.5 286.9L585.4 287.7L580.4 288.2L575.4 288.6L570.4 288.7L565.3 288.6L560.3 288.3L555.3 287.6L550.3 286.7L545.2 285.4L540.2 283.1ZM540.1 289.2L545.2 292.0L550.3 293.9L555.4 295.3L560.5 296.3L565.5 297.0L570.6 297.3L575.7 297.4L580.8 297.2L585.8 296.8L590.9 296.0L596.0 295.1L601.1 294.0L606.2 292.6L611.2 291.1L616.3 289.5L621.4 287.4L626.5 285.1L631.5 282.7L636.6 280.2L641.7 277.5L641.7 277.5L636.6 279.1L631.5 280.7L626.5 282.2L621.4 283.6L616.3 285.0L611.2 286.6L606.2 288.1L601.1 289.4L596.0 290.5L590.9 291.5L585.8 292.3L580.8 292.9L575.7 293.2L570.6 293.4L565.5 293.3L560.5 293.0L555.4 292.4L550.3 291.5L545.2 290.1L540.1 287.8ZM540.1 293.9L545.2 296.8L550.3 298.6L555.5 300.0L560.6 301.0L565.7 301.7L570.9 302.1L576.0 302.1L581.1 301.9L586.2 301.4L591.4 300.6L596.5 299.6L601.6 298.4L606.8 297.0L611.9 295.5L617.0 293.7L622.1 291.6L627.3 289.1L632.4 286.6L637.5 284.0L642.6 281.2L642.6 281.2L637.5 282.8L632.4 284.5L627.3 286.1L622.1 287.6L617.0 289.1L611.9 290.8L606.8 292.3L601.6 293.7L596.5 294.9L591.4 295.9L586.2 296.8L581.1 297.4L576.0 297.8L570.9 298.0L565.7 298.0L560.6 297.7L555.5 297.1L550.3 296.2L545.2 294.9L540.1 292.6ZM540.0 298.7L545.2 301.5L550.4 303.4L555.5 304.7L560.7 305.7L565.9 306.4L571.0 306.7L576.2 306.8L581.4 306.5L586.6 306.0L591.7 305.2L596.9 304.2L602.1 303.0L607.2 301.5L612.4 299.9L617.6 298.1L622.8 296.0L627.9 293.5L633.1 290.9L638.3 288.1L643.4 285.2L643.4 285.2L638.3 286.9L633.1 288.6L627.9 290.3L622.8 291.8L617.6 293.4L612.4 295.2L607.2 296.7L602.1 298.2L596.9 299.4L591.7 300.5L586.6 301.4L581.4 302.1L576.2 302.5L571.0 302.8L565.9 302.7L560.7 302.4L555.5 301.8L550.4 300.9L545.2 299.6L540.0 297.3ZM540.0 303.4L545.2 306.3L550.4 308.1L555.6 309.4L560.8 310.4L566.0 311.0L571.2 311.3L576.4 311.4L581.6 311.1L586.8 310.5L592.0 309.7L597.3 308.7L602.5 307.4L607.7 306.0L612.9 304.3L618.1 302.5L623.3 300.3L628.5 297.8L633.7 295.2L638.9 292.5L644.1 289.5L644.1 289.5L638.9 291.3L633.7 293.1L628.5 294.8L623.3 296.4L618.1 298.1L612.9 299.8L607.7 301.5L602.5 302.9L597.3 304.2L592.0 305.3L586.8 306.2L581.6 306.9L576.4 307.4L571.2 307.6L566.0 307.5L560.8 307.2L555.6 306.7L550.4 305.7L545.2 304.4L540.0 302.1ZM539.9 308.2L545.2 311.1L550.4 312.9L555.7 314.2L560.9 315.2L566.2 315.8L571.4 316.1L576.6 316.1L581.9 315.8L587.1 315.2L592.4 314.4L597.6 313.3L602.9 312.0L608.1 310.6L613.3 308.9L618.6 307.0L623.8 304.8L629.1 302.3L634.3 299.6L639.6 296.8L644.8 293.8L644.8 293.8L639.6 295.6L634.3 297.5L629.1 299.2L623.8 300.9L618.6 302.6L613.3 304.4L608.1 306.0L602.9 307.5L597.6 308.8L592.4 310.0L587.1 310.9L581.9 311.6L576.6 312.1L571.4 312.3L566.2 312.3L560.9 312.0L555.7 311.4L550.4 310.5L545.2 309.1L539.9 306.8ZM539.9 313.0L545.2 315.8L550.5 317.6L555.7 319.0L561.0 320.0L566.3 320.6L571.6 320.9L576.9 320.9L582.1 320.5L587.4 320.0L592.7 319.1L598.0 318.0L603.3 316.7L608.5 315.2L613.8 313.5L619.1 311.6L624.4 309.4L629.7 306.8L634.9 304.0L640.2 301.2L645.5 298.1L645.5 298.1L640.2 300.0L634.9 301.8L629.7 303.6L624.4 305.3L619.1 307.0L613.8 308.9L608.5 310.5L603.3 312.0L598.0 313.4L592.7 314.5L587.4 315.5L582.1 316.2L576.9 316.7L571.6 316.9L566.3 316.9L561.0 316.6L555.7 316.1L550.5 315.2L545.2 313.8L539.9 311.5ZM539.9 317.7L545.1 320.6L550.4 322.4L555.7 323.8L561.0 324.7L566.2 325.3L571.5 325.6L576.8 325.6L582.0 325.3L587.3 324.7L592.6 323.8L597.9 322.7L603.1 321.3L608.4 319.8L613.7 318.0L619.0 316.1L624.2 313.8L629.5 311.1L634.8 308.3L640.1 305.4L645.3 302.2L645.3 302.2L640.1 304.2L634.8 306.1L629.5 307.9L624.2 309.6L619.0 311.4L613.7 313.3L608.4 315.0L603.1 316.5L597.9 317.9L592.6 319.1L587.3 320.1L582.0 320.8L576.8 321.3L571.5 321.6L566.2 321.6L561.0 321.3L555.7 320.8L550.4 319.9L545.1 318.6L539.9 316.3ZM539.8 322.5L545.1 325.4L550.3 327.1L555.6 328.5L560.9 329.4L566.1 330.0L571.4 330.2L576.6 330.2L581.9 329.8L587.2 329.2L592.4 328.2L597.7 327.1L602.9 325.7L608.2 324.1L613.4 322.3L618.7 320.3L624.0 318.0L629.2 315.3L634.5 312.5L639.7 309.5L645.0 306.3L645.0 306.3L639.7 308.4L634.5 310.4L629.2 312.3L624.0 314.1L618.7 316.0L613.4 317.9L608.2 319.7L602.9 321.2L597.7 322.6L592.4 323.8L587.2 324.8L581.9 325.6L576.6 326.1L571.4 326.4L566.1 326.4L560.9 326.1L555.6 325.6L550.3 324.6L545.1 323.3L539.8 321.0ZM539.8 327.3L545.0 330.1L550.3 331.9L555.5 333.2L560.8 334.1L566.0 334.7L571.2 334.9L576.5 334.8L581.7 334.5L587.0 333.8L592.2 332.9L597.4 331.7L602.7 330.3L607.9 328.6L613.2 326.8L618.4 324.8L623.6 322.4L628.9 319.6L634.1 316.7L639.4 313.7L644.6 310.5L644.6 310.5L639.4 312.5L634.1 314.6L628.9 316.6L623.6 318.4L618.4 320.3L613.2 322.3L607.9 324.1L602.7 325.8L597.4 327.2L592.2 328.4L587.0 329.5L581.7 330.3L576.5 330.8L571.2 331.1L566.0 331.1L560.8 330.9L555.5 330.3L550.3 329.4L545.0 328.0L539.8 325.7ZM539.8 332.1L544.9 334.9L550.1 336.7L555.3 338.0L560.5 338.9L565.7 339.5L570.9 339.7L576.1 339.6L581.3 339.3L586.5 338.6L591.7 337.7L596.9 336.5L602.1 335.0L607.3 333.4L612.5 331.5L617.7 329.5L622.9 327.0L628.1 324.2L633.3 321.3L638.5 318.2L643.7 314.9L643.7 314.9L638.5 316.9L633.3 319.0L628.1 321.0L622.9 322.9L617.7 324.8L612.5 326.8L607.3 328.6L602.1 330.3L596.9 331.8L591.7 333.0L586.5 334.1L581.3 334.9L576.1 335.4L570.9 335.8L565.7 335.8L560.5 335.5L555.3 335.0L550.1 334.1L544.9 332.8L539.8 330.4ZM539.7 336.8L544.9 339.7L550.0 341.5L555.2 342.8L560.3 343.7L565.5 344.3L570.6 344.5L575.8 344.5L580.9 344.1L586.1 343.4L591.2 342.4L596.4 341.2L601.5 339.8L606.7 338.1L611.9 336.2L617.0 334.2L622.2 331.7L627.3 328.8L632.5 325.8L637.6 322.7L642.8 319.3L642.8 319.3L637.6 321.4L632.5 323.5L627.3 325.5L622.2 327.3L617.0 329.2L611.9 331.3L606.7 333.1L601.5 334.8L596.4 336.3L591.2 337.6L586.1 338.7L580.9 339.5L575.8 340.1L570.6 340.4L565.5 340.5L560.3 340.2L555.2 339.7L550.0 338.8L544.9 337.5L539.7 335.2ZM539.7 341.6L544.8 344.4L549.9 346.2L555.0 347.5L560.1 348.4L565.2 349.0L570.3 349.2L575.4 349.1L580.5 348.7L585.6 348.0L590.7 347.1L595.8 345.9L600.9 344.4L606.0 342.7L611.1 340.8L616.2 338.7L621.3 336.2L626.4 333.3L631.5 330.3L636.6 327.1L641.8 323.7L641.8 323.7L636.6 325.8L631.5 328.0L626.4 330.0L621.3 331.9L616.2 333.8L611.1 335.9L606.0 337.8L600.9 339.5L595.8 341.0L590.7 342.3L585.6 343.4L580.5 344.2L575.4 344.8L570.3 345.2L565.2 345.2L560.1 345.0L555.0 344.4L549.9 343.5L544.8 342.2L539.7 339.9ZM539.6 346.4L544.7 349.2L549.7 351.0L554.7 352.3L559.7 353.2L564.8 353.7L569.8 353.9L574.8 353.8L579.8 353.4L584.9 352.7L589.9 351.7L594.9 350.5L600.0 349.0L605.0 347.3L610.0 345.4L615.0 343.3L620.1 340.7L625.1 337.8L630.1 334.8L635.1 331.6L640.2 328.2L640.2 328.2L635.1 330.4L630.1 332.6L625.1 334.6L620.1 336.6L615.0 338.5L610.0 340.6L605.0 342.5L600.0 344.2L594.9 345.8L589.9 347.1L584.9 348.2L579.8 349.0L574.8 349.6L569.8 349.9L564.8 350.0L559.7 349.8L554.7 349.2L549.7 348.3L544.7 347.0L539.6 344.6ZM539.6 351.2L544.5 354.0L549.5 355.7L554.4 357.0L559.4 357.9L564.3 358.5L569.3 358.7L574.2 358.6L579.2 358.2L584.1 357.5L589.1 356.5L594.0 355.2L599.0 353.7L603.9 352.0L608.9 350.1L613.8 348.0L618.8 345.3L623.7 342.4L628.7 339.4L633.6 336.2L638.6 332.7L638.6 332.7L633.6 334.9L628.7 337.1L623.7 339.2L618.8 341.2L613.8 343.1L608.9 345.2L603.9 347.1L599.0 348.8L594.0 350.4L589.1 351.7L584.1 352.8L579.2 353.7L574.2 354.3L569.3 354.6L564.3 354.7L559.4 354.5L554.4 353.9L549.5 353.0L544.5 351.7L539.6 349.3ZM539.6 355.9L544.5 358.7L549.3 360.5L554.2 361.8L559.1 362.7L563.9 363.2L568.8 363.4L573.7 363.3L578.5 362.8L583.4 362.1L588.3 361.1L593.1 359.8L598.0 358.3L602.9 356.6L607.7 354.6L612.6 352.5L617.5 349.8L622.3 346.9L627.2 343.9L632.1 340.7L636.9 337.2L636.9 337.2L632.1 339.5L627.2 341.7L622.3 343.8L617.5 345.9L612.6 347.8L607.7 349.9L602.9 351.8L598.0 353.6L593.1 355.1L588.3 356.5L583.4 357.6L578.5 358.4L573.7 359.1L568.8 359.4L563.9 359.5L559.1 359.2L554.2 358.7L549.3 357.8L544.5 356.4L539.6 354.1ZM539.6 360.7L544.4 363.5L549.2 365.2L553.9 366.5L558.7 367.4L563.5 367.9L568.3 368.1L573.1 367.9L577.8 367.5L582.6 366.7L587.4 365.7L592.2 364.4L597.0 362.9L601.7 361.2L606.5 359.2L611.3 357.0L616.1 354.3L620.9 351.4L625.6 348.4L630.4 345.1L635.2 341.7L635.2 341.7L630.4 344.0L625.6 346.3L620.9 348.5L616.1 350.5L611.3 352.4L606.5 354.6L601.7 356.5L597.0 358.3L592.2 359.9L587.4 361.2L582.6 362.4L577.8 363.2L573.1 363.8L568.3 364.2L563.5 364.2L558.7 364.0L553.9 363.4L549.2 362.5L544.4 361.2L539.6 358.8ZM539.6 365.5L544.3 368.3L549.0 370.0L553.6 371.3L558.3 372.2L563.0 372.7L567.7 372.9L572.3 372.8L577.0 372.4L581.7 371.6L586.4 370.6L591.0 369.3L595.7 367.8L600.4 366.1L605.1 364.1L609.7 361.9L614.4 359.2L619.1 356.2L623.8 353.1L628.5 349.9L633.1 346.3L633.1 346.3L628.5 348.6L623.8 350.8L619.1 353.0L614.4 355.0L609.7 356.9L605.1 359.1L600.4 361.1L595.7 362.8L591.0 364.4L586.4 365.8L581.7 366.9L577.0 367.8L572.3 368.4L567.7 368.8L563.0 368.9L558.3 368.7L553.6 368.1L549.0 367.2L544.3 365.9L539.6 363.5ZM539.6 370.2L544.2 373.0L548.7 374.8L553.3 376.0L557.8 376.9L562.4 377.4L566.9 377.6L571.5 377.5L576.0 377.1L580.6 376.3L585.2 375.3L589.7 374.1L594.3 372.5L598.8 370.8L603.4 368.9L607.9 366.7L612.5 363.9L617.0 361.0L621.6 357.9L626.2 354.7L630.7 351.2L630.7 351.2L626.2 353.4L621.6 355.7L617.0 357.8L612.5 359.9L607.9 361.8L603.4 363.9L598.8 365.9L594.3 367.7L589.7 369.2L585.2 370.6L580.6 371.7L576.0 372.6L571.5 373.3L566.9 373.6L562.4 373.7L557.8 373.4L553.3 372.9L548.7 372.0L544.2 370.7L539.6 368.3ZM539.6 375.0L544.0 377.8L548.5 379.5L552.9 380.8L557.4 381.6L561.8 382.2L566.2 382.4L570.7 382.2L575.1 381.8L579.6 381.1L584.0 380.1L588.5 378.8L592.9 377.3L597.3 375.6L601.8 373.7L606.2 371.5L610.7 368.8L615.1 365.9L619.5 362.8L624.0 359.6L628.4 356.1L628.4 356.1L624.0 358.3L619.5 360.6L615.1 362.7L610.7 364.8L606.2 366.7L601.8 368.8L597.3 370.7L592.9 372.5L588.5 374.1L584.0 375.4L579.6 376.6L575.1 377.4L570.7 378.1L566.2 378.4L561.8 378.5L557.4 378.2L552.9 377.7L548.5 376.8L544.0 375.4L539.6 373.0ZM539.6 379.7L544.0 382.5L548.3 384.3L552.7 385.6L557.0 386.5L561.4 387.0L565.7 387.3L570.1 387.2L574.4 386.8L578.8 386.1L583.1 385.1L587.5 383.9L591.8 382.4L596.2 380.7L600.5 378.9L604.9 376.7L609.2 374.0L613.6 371.1L617.9 368.1L622.3 364.8L626.6 361.3L626.6 361.3L622.3 363.4L617.9 365.6L613.6 367.7L609.2 369.6L604.9 371.5L600.5 373.5L596.2 375.5L591.8 377.2L587.5 378.8L583.1 380.1L578.8 381.2L574.4 382.1L570.1 382.7L565.7 383.1L561.4 383.1L557.0 382.9L552.7 382.4L548.3 381.5L544.0 380.1L539.6 377.8ZM539.6 384.5L543.9 387.2L548.1 388.9L552.4 390.1L556.6 391.0L560.9 391.5L565.2 391.7L569.4 391.5L573.7 391.1L578.0 390.5L582.2 389.5L586.5 388.4L590.7 387.0L595.0 385.3L599.3 383.5L603.5 381.5L607.8 378.9L612.0 376.1L616.3 373.2L620.6 370.0L624.8 366.6L624.8 366.6L620.6 368.7L616.3 370.8L612.0 372.9L607.8 374.8L603.5 376.7L599.3 378.7L595.0 380.6L590.7 382.4L586.5 383.9L582.2 385.3L578.0 386.3L573.7 387.2L569.4 387.8L565.2 388.1L560.9 388.1L556.6 387.8L552.4 387.2L548.1 386.3L543.9 384.9L539.6 382.5ZM539.6 389.2L543.8 391.7L548.0 393.2L552.1 394.3L556.3 395.1L560.5 395.5L564.7 395.7L568.9 395.6L573.1 395.2L577.2 394.6L581.4 393.8L585.6 392.8L589.8 391.5L594.0 390.1L598.2 388.5L602.3 386.6L606.5 384.2L610.7 381.7L614.9 378.9L619.1 376.0L623.2 372.7L623.2 372.7L619.1 374.4L614.9 376.3L610.7 378.1L606.5 379.8L602.3 381.5L598.2 383.4L594.0 385.1L589.8 386.8L585.6 388.2L581.4 389.4L577.2 390.5L573.1 391.3L568.9 391.8L564.7 392.1L560.5 392.2L556.3 391.9L552.1 391.4L548.0 390.6L543.8 389.4L539.6 387.3ZM539.6 394.0L543.7 396.2L547.8 397.6L551.9 398.6L556.1 399.4L560.2 399.8L564.3 400.0L568.4 399.9L572.5 399.5L576.6 399.0L580.7 398.2L584.8 397.3L589.0 396.1L593.1 394.8L597.2 393.3L601.3 391.6L605.4 389.4L609.5 387.0L613.6 384.5L617.7 381.7L621.9 378.7L621.9 378.7L617.7 380.3L613.6 381.9L609.5 383.5L605.4 385.1L601.3 386.5L597.2 388.3L593.1 389.9L589.0 391.4L584.8 392.7L580.7 393.8L576.6 394.7L572.5 395.4L568.4 396.0L564.3 396.3L560.2 396.3L556.1 396.1L551.9 395.7L547.8 395.0L543.7 393.9L539.6 392.0ZM539.6 398.7L543.7 401.0L547.8 402.4L551.8 403.5L555.9 404.2L560.0 404.7L564.1 404.9L568.2 404.9L572.2 404.6L576.3 404.1L580.4 403.4L584.5 402.4L588.5 401.3L592.6 400.0L596.7 398.6L600.8 397.0L604.9 394.9L608.9 392.6L613.0 390.1L617.1 387.4L621.2 384.5L621.2 384.5L617.1 385.9L613.0 387.4L608.9 388.9L604.9 390.3L600.8 391.7L596.7 393.4L592.6 394.9L588.5 396.3L584.5 397.5L580.4 398.6L576.3 399.5L572.2 400.2L568.2 400.7L564.1 400.9L560.0 401.0L555.9 400.8L551.8 400.4L547.8 399.7L543.7 398.6L539.6 396.8ZM539.6 403.5L544.1 405.8L548.6 407.2L553.0 408.3L557.5 409.1L562.0 409.6L566.5 409.8L570.9 409.8L575.4 409.5L579.9 409.1L584.3 408.4L588.8 407.5L593.3 406.4L597.8 405.2L602.2 403.8L606.7 402.3L611.2 400.6L615.6 398.3L620.1 395.8L624.6 393.1L629.0 390.2L629.0 390.2L624.6 391.4L620.1 392.7L615.6 394.0L611.2 395.3L606.7 397.0L602.2 398.5L597.8 400.0L593.3 401.3L588.8 402.5L584.3 403.5L579.9 404.3L575.4 405.0L570.9 405.5L566.5 405.7L562.0 405.8L557.5 405.6L553.0 405.1L548.6 404.4L544.1 403.4L539.6 401.5ZM539.7 408.2L544.6 410.5L549.5 411.9L554.4 413.0L559.3 413.8L564.2 414.3L569.1 414.5L574.0 414.5L578.9 414.3L583.8 413.8L588.7 413.2L593.6 412.3L598.5 411.3L603.4 410.1L608.3 408.8L613.2 407.3L618.1 405.7L623.0 403.5L627.9 401.1L632.7 398.5L637.6 395.7L637.6 395.7L632.7 396.8L627.9 398.1L623.0 399.3L618.1 400.6L613.2 402.2L608.3 403.8L603.4 405.2L598.5 406.4L593.6 407.6L588.7 408.5L583.8 409.3L578.9 409.9L574.0 410.3L569.1 410.6L564.2 410.6L559.3 410.4L554.4 409.9L549.5 409.2L544.6 408.1L539.7 406.3ZM539.8 413.0L544.9 415.3L550.1 416.7L555.2 417.8L560.4 418.6L565.5 419.1L570.7 419.3L575.8 419.3L581.0 419.1L586.1 418.6L591.3 418.0L596.4 417.2L601.6 416.2L606.7 415.0L611.9 413.6L617.0 412.2L622.2 410.6L627.3 408.4L632.5 406.1L637.6 403.6L642.8 400.8L642.8 400.8L637.6 402.0L632.5 403.3L627.3 404.5L622.2 405.7L617.0 407.3L611.9 408.8L606.7 410.1L601.6 411.4L596.4 412.4L591.3 413.4L586.1 414.1L581.0 414.7L575.8 415.1L570.7 415.4L565.5 415.4L560.4 415.1L555.2 414.7L550.1 413.9L544.9 412.9L539.8 411.0ZM539.9 417.7L545.1 420.0L550.3 421.5L555.6 422.6L560.8 423.4L566.1 423.9L571.3 424.2L576.5 424.2L581.8 424.0L587.0 423.5L592.3 422.9L597.5 422.1L602.8 421.1L608.0 419.9L613.2 418.6L618.5 417.1L623.7 415.5L629.0 413.4L634.2 411.0L639.5 408.5L644.7 405.7L644.7 405.7L639.5 406.8L634.2 408.0L629.0 409.2L623.7 410.4L618.5 412.0L613.2 413.4L608.0 414.8L602.8 416.0L597.5 417.1L592.3 418.0L587.0 418.8L581.8 419.4L576.5 419.8L571.3 420.0L566.1 420.0L560.8 419.8L555.6 419.4L550.3 418.6L545.1 417.6L539.9 415.8ZM539.9 422.5L545.2 424.8L550.5 426.3L555.8 427.4L561.1 428.2L566.3 428.7L571.6 429.0L576.9 429.0L582.2 428.8L587.5 428.4L592.8 427.7L598.0 426.9L603.3 425.9L608.6 424.8L613.9 423.5L619.2 422.0L624.5 420.5L629.7 418.3L635.0 416.0L640.3 413.5L645.6 410.7L645.6 410.7L640.3 411.8L635.0 412.9L629.7 414.1L624.5 415.2L619.2 416.8L613.9 418.3L608.6 419.6L603.3 420.8L598.0 421.9L592.8 422.8L587.5 423.6L582.2 424.1L576.9 424.5L571.6 424.8L566.3 424.8L561.1 424.5L555.8 424.1L550.5 423.4L545.2 422.4L539.9 420.5ZM540.0 427.2L545.3 429.5L550.6 431.0L555.8 432.1L561.1 432.9L566.4 433.5L571.7 433.7L577.0 433.8L582.2 433.6L587.5 433.2L592.8 432.6L598.1 431.8L603.4 430.8L608.6 429.7L613.9 428.4L619.2 427.0L624.5 425.5L629.8 423.4L635.0 421.0L640.3 418.6L645.6 415.9L645.6 415.9L640.3 416.9L635.0 418.0L629.8 419.1L624.5 420.2L619.2 421.8L613.9 423.2L608.6 424.5L603.4 425.7L598.1 426.7L592.8 427.6L587.5 428.4L582.2 428.9L577.0 429.3L571.7 429.5L566.4 429.5L561.1 429.3L555.8 428.9L550.6 428.1L545.3 427.1L540.0 425.3ZM540.1 432.0L545.3 434.3L550.6 435.7L555.9 436.8L561.2 437.6L566.4 438.1L571.7 438.4L577.0 438.4L582.3 438.2L587.6 437.8L592.8 437.3L598.1 436.5L603.4 435.5L608.7 434.4L613.9 433.2L619.2 431.8L624.5 430.3L629.8 428.2L635.0 426.0L640.3 423.6L645.6 421.0L645.6 421.0L640.3 422.0L635.0 423.2L629.8 424.3L624.5 425.4L619.2 426.9L613.9 428.3L608.7 429.6L603.4 430.7L598.1 431.8L592.8 432.6L587.6 433.3L582.3 433.9L577.0 434.3L571.7 434.4L566.4 434.4L561.2 434.2L555.9 433.7L550.6 432.9L545.3 431.9L540.1 430.0ZM540.1 436.7L545.4 439.0L550.6 440.5L555.9 441.6L561.1 442.4L566.3 442.9L571.6 443.2L576.8 443.2L582.1 443.1L587.3 442.7L592.6 442.1L597.8 441.3L603.0 440.4L608.3 439.3L613.5 438.1L618.8 436.7L624.0 435.3L629.3 433.2L634.5 431.0L639.7 428.7L645.0 426.1L645.0 426.1L639.7 427.1L634.5 428.2L629.3 429.3L624.0 430.3L618.8 431.8L613.5 433.2L608.3 434.4L603.0 435.6L597.8 436.6L592.6 437.4L587.3 438.1L582.1 438.7L576.8 439.0L571.6 439.2L566.3 439.2L561.1 438.9L555.9 438.4L550.6 437.7L545.4 436.6L540.1 434.8ZM540.2 441.5L545.4 443.8L550.6 445.3L555.8 446.4L561.1 447.2L566.3 447.7L571.5 448.1L576.7 448.1L581.9 448.0L587.1 447.6L592.3 447.1L597.5 446.3L602.7 445.4L607.9 444.4L613.1 443.2L618.3 441.8L623.5 440.4L628.8 438.3L634.0 436.1L639.2 433.8L644.4 431.2L644.4 431.2L639.2 432.1L634.0 433.1L628.8 434.2L623.5 435.2L618.3 436.6L613.1 437.9L607.9 439.2L602.7 440.3L597.5 441.3L592.3 442.1L587.1 442.8L581.9 443.3L576.7 443.7L571.5 443.9L566.3 443.8L561.1 443.6L555.8 443.1L550.6 442.4L545.4 441.4L540.2 439.5ZM540.4 446.2L545.6 448.6L550.7 450.1L555.9 451.2L561.1 452.0L566.3 452.6L571.4 452.9L576.6 453.0L581.8 452.9L586.9 452.5L592.1 452.0L597.3 451.3L602.4 450.4L607.6 449.3L612.8 448.1L618.0 446.8L623.1 445.3L628.3 443.2L633.5 441.1L638.6 438.8L643.8 436.2L643.8 436.2L638.6 437.2L633.5 438.2L628.3 439.2L623.1 440.1L618.0 441.5L612.8 442.8L607.6 444.0L602.4 445.1L597.3 446.1L592.1 446.9L586.9 447.5L581.8 448.1L576.6 448.4L571.4 448.6L566.3 448.5L561.1 448.3L555.9 447.8L550.7 447.1L545.6 446.1L540.4 444.3ZM540.6 451.0L545.8 453.5L550.9 455.1L556.1 456.4L561.2 457.3L566.4 457.9L571.6 458.3L576.7 458.4L581.9 458.3L587.0 457.9L592.2 457.4L597.4 456.6L602.5 455.7L607.7 454.6L612.8 453.3L618.0 451.9L623.2 450.4L628.3 448.2L633.5 445.9L638.6 443.6L643.8 441.0L643.8 441.0L638.6 442.0L633.5 443.1L628.3 444.1L623.2 445.1L618.0 446.5L612.8 447.8L607.7 449.0L602.5 450.1L597.4 451.1L592.2 452.0L587.0 452.6L581.9 453.2L576.7 453.5L571.6 453.7L566.4 453.6L561.2 453.4L556.1 452.9L550.9 452.1L545.8 451.0L540.6 449.0ZM540.8 455.7L545.9 458.4L551.1 460.1L556.2 461.4L561.4 462.4L566.5 463.1L571.7 463.5L576.8 463.6L582.0 463.4L587.1 463.1L592.3 462.5L597.4 461.7L602.6 460.7L607.7 459.6L612.9 458.3L618.0 456.8L623.2 455.2L628.3 453.0L633.5 450.7L638.6 448.3L643.8 445.8L643.8 445.8L638.6 446.8L633.5 448.0L628.3 449.1L623.2 450.2L618.0 451.6L612.9 453.0L607.7 454.3L602.6 455.4L597.4 456.5L592.3 457.3L587.1 458.0L582.0 458.5L576.8 458.9L571.7 459.0L566.5 458.9L561.4 458.6L556.2 458.0L551.1 457.2L545.9 455.9L540.8 453.8ZM541.0 460.5L546.1 463.3L551.3 465.1L556.4 466.5L561.5 467.5L566.7 468.2L571.8 468.6L577.0 468.8L582.1 468.6L587.2 468.3L592.4 467.7L597.5 466.8L602.7 465.8L607.8 464.6L613.0 463.3L618.1 461.8L623.2 460.1L628.4 457.8L633.5 455.5L638.7 453.1L643.8 450.5L643.8 450.5L638.7 451.7L633.5 453.0L628.4 454.2L623.2 455.3L618.1 456.8L613.0 458.2L607.8 459.5L602.7 460.7L597.5 461.7L592.4 462.6L587.2 463.3L582.1 463.9L577.0 464.2L571.8 464.3L566.7 464.2L561.5 463.8L556.4 463.1L551.3 462.2L546.1 460.8L541.0 458.5ZM541.2 465.2L546.3 468.3L551.5 470.2L556.6 471.7L561.8 472.8L567.0 473.6L572.1 474.0L577.3 474.2L582.4 474.0L587.6 473.7L592.8 473.0L597.9 472.2L603.1 471.1L608.2 469.9L613.4 468.4L618.6 466.9L623.7 465.1L628.9 462.7L634.0 460.3L639.2 457.8L644.3 455.1L644.3 455.1L639.2 456.3L634.0 457.6L628.9 458.9L623.7 460.1L618.6 461.6L613.4 463.1L608.2 464.5L603.1 465.7L597.9 466.8L592.8 467.7L587.6 468.4L582.4 469.0L577.3 469.3L572.1 469.4L567.0 469.3L561.8 468.9L556.6 468.2L551.5 467.2L546.3 465.7L541.2 463.3ZM541.6 470.0L546.7 473.2L551.9 475.2L557.1 476.8L562.3 477.9L567.4 478.7L572.6 479.2L577.8 479.4L582.9 479.2L588.1 478.8L593.3 478.2L598.4 477.3L603.6 476.2L608.8 474.9L613.9 473.4L619.1 471.8L624.3 469.9L629.4 467.5L634.6 465.0L639.8 462.4L645.0 459.6L645.0 459.6L639.8 460.9L634.6 462.3L629.4 463.7L624.3 465.0L619.1 466.6L613.9 468.2L608.8 469.6L603.6 470.9L598.4 472.0L593.3 473.0L588.1 473.8L582.9 474.3L577.8 474.6L572.6 474.7L567.4 474.6L562.3 474.1L557.1 473.3L551.9 472.2L546.7 470.7L541.6 468.0ZM542.0 474.7L547.2 477.9L552.4 480.0L557.5 481.5L562.7 482.6L567.9 483.4L573.1 483.9L578.3 484.0L583.4 483.9L588.6 483.4L593.8 482.8L599.0 481.9L604.1 480.7L609.3 479.4L614.5 477.9L619.7 476.3L624.9 474.4L630.0 472.0L635.2 469.5L640.4 466.9L645.6 464.2L645.6 464.2L640.4 465.6L635.2 467.1L630.0 468.5L624.9 469.8L619.7 471.5L614.5 473.1L609.3 474.6L604.1 475.9L599.0 477.0L593.8 478.0L588.6 478.8L583.4 479.3L578.3 479.7L573.1 479.7L567.9 479.5L562.7 479.0L557.5 478.2L552.4 477.1L547.2 475.5L542.0 472.8ZM542.5 479.5L547.7 482.7L552.9 484.8L558.1 486.4L563.3 487.5L568.5 488.3L573.7 488.8L578.9 488.9L584.1 488.8L589.3 488.4L594.5 487.7L599.7 486.7L604.9 485.6L610.1 484.2L615.3 482.7L620.5 481.0L625.7 479.1L630.9 476.6L636.1 474.1L641.3 471.4L646.5 468.5L646.5 468.5L641.3 470.0L636.1 471.5L630.9 473.0L625.7 474.4L620.5 476.1L615.3 477.7L610.1 479.2L604.9 480.6L599.7 481.8L594.5 482.8L589.3 483.6L584.1 484.1L578.9 484.5L573.7 484.6L568.5 484.4L563.3 483.9L558.1 483.1L552.9 481.9L547.7 480.3L542.5 477.5ZM543.2 484.2L548.5 487.5L553.7 489.6L558.9 491.1L564.1 492.3L569.3 493.1L574.5 493.5L579.8 493.6L585.0 493.5L590.2 493.0L595.4 492.3L600.6 491.3L605.8 490.2L611.0 488.8L616.3 487.2L621.5 485.5L626.7 483.5L631.9 481.1L637.1 478.5L642.3 475.8L647.6 472.9L647.6 472.9L642.3 474.5L637.1 476.1L631.9 477.6L626.7 479.1L621.5 480.8L616.3 482.5L611.0 484.0L605.8 485.4L600.6 486.6L595.4 487.6L590.2 488.5L585.0 489.0L579.8 489.4L574.5 489.5L569.3 489.3L564.1 488.8L558.9 487.9L553.7 486.7L548.5 485.1L543.2 482.3ZM544.2 489.0L549.4 492.3L554.6 494.3L559.9 495.9L565.1 497.0L570.3 497.8L575.5 498.2L580.7 498.4L585.9 498.2L591.2 497.7L596.4 497.0L601.6 496.0L606.8 494.8L612.0 493.4L617.2 491.8L622.5 490.1L627.7 488.1L632.9 485.6L638.1 483.0L643.3 480.2L648.6 477.3L648.6 477.3L643.3 478.9L638.1 480.5L632.9 482.1L627.7 483.6L622.5 485.3L617.2 487.0L612.0 488.6L606.8 490.0L601.6 491.2L596.4 492.3L591.2 493.1L585.9 493.7L580.7 494.1L575.5 494.2L570.3 494.0L565.1 493.5L559.9 492.6L554.6 491.5L549.4 489.8L544.2 487.0ZM545.5 493.7L550.7 497.1L555.9 499.1L561.1 500.6L566.3 501.6L571.5 502.3L576.7 502.7L581.9 502.7L587.1 502.5L592.3 502.0L597.5 501.3L602.7 500.3L607.9 499.2L613.1 497.8L618.3 496.2L623.5 494.5L628.7 492.5L633.8 490.0L639.0 487.4L644.2 484.7L649.4 481.7L649.4 481.7L644.2 483.4L639.0 485.1L633.8 486.8L628.7 488.3L623.5 490.0L618.3 491.8L613.1 493.3L607.9 494.8L602.7 496.0L597.5 497.1L592.3 497.9L587.1 498.5L581.9 498.8L576.7 498.9L571.5 498.8L566.3 498.3L561.1 497.5L555.9 496.3L550.7 494.7L545.5 491.8ZM547.1 498.5L552.2 502.0L557.4 503.9L562.5 505.2L567.6 506.2L572.7 506.8L577.9 507.1L583.0 507.1L588.1 506.8L593.2 506.3L598.4 505.6L603.5 504.7L608.6 503.5L613.8 502.2L618.9 500.7L624.0 499.0L629.1 496.9L634.3 494.5L639.4 491.9L644.5 489.1L649.7 485.9L649.7 485.9L644.5 487.8L639.4 489.6L634.3 491.3L629.1 492.8L624.0 494.4L618.9 496.1L613.8 497.7L608.6 499.1L603.5 500.3L598.4 501.3L593.2 502.2L588.1 502.8L583.0 503.2L577.9 503.3L572.7 503.2L567.6 502.8L562.5 502.1L557.4 501.0L552.2 499.5L547.1 496.5ZM548.7 503.2L553.8 507.0L558.8 508.9L563.9 510.2L568.9 511.1L574.0 511.6L579.1 511.9L584.1 511.9L589.2 511.6L594.2 511.1L599.3 510.4L604.4 509.5L609.4 508.4L614.5 507.0L619.5 505.5L624.6 503.9L629.6 501.7L634.7 499.2L639.8 496.5L644.8 493.6L649.9 490.1L649.9 490.1L644.8 492.3L639.8 494.1L634.7 495.8L629.6 497.3L624.6 498.9L619.5 500.6L614.5 502.1L609.4 503.5L604.4 504.7L599.3 505.7L594.2 506.6L589.2 507.2L584.1 507.6L579.1 507.8L574.0 507.8L568.9 507.5L563.9 506.9L558.8 505.9L553.8 504.5L548.7 501.3ZM550.9 508.0L555.8 512.3L560.8 514.1L565.7 515.4L570.6 516.3L575.6 516.8L580.5 517.1L585.4 517.1L590.4 516.9L595.3 516.5L600.2 515.8L605.2 515.0L610.1 513.9L615.0 512.7L620.0 511.3L624.9 509.7L629.8 507.5L634.8 505.0L639.7 502.2L644.6 499.2L649.6 495.3L649.6 495.3L644.6 497.6L639.7 499.4L634.8 501.0L629.8 502.5L624.9 503.9L620.0 505.6L615.0 507.1L610.1 508.5L605.2 509.7L600.2 510.7L595.3 511.5L590.4 512.2L585.4 512.6L580.5 512.8L575.6 512.8L570.6 512.6L565.7 512.0L560.8 511.1L555.8 509.6L550.9 506.0ZM553.1 512.7L557.9 517.5L562.6 519.3L567.4 520.6L572.2 521.4L577.0 522.0L581.7 522.3L586.5 522.3L591.3 522.2L596.0 521.8L600.8 521.3L605.6 520.6L610.3 519.7L615.1 518.6L619.9 517.4L624.6 515.9L629.4 513.8L634.2 511.5L639.0 509.0L643.7 506.0L648.5 501.9L648.5 501.9L643.7 504.3L639.0 506.0L634.2 507.5L629.4 508.8L624.6 510.0L619.9 511.5L615.1 512.9L610.3 514.1L605.6 515.2L600.8 516.1L596.0 516.9L591.3 517.5L586.5 517.8L581.7 518.0L577.0 518.0L572.2 517.7L567.4 517.2L562.6 516.3L557.9 514.8L553.1 510.8ZM555.5 517.5L560.0 522.7L564.5 524.4L569.1 525.6L573.6 526.4L578.1 527.0L582.7 527.2L587.2 527.3L591.7 527.2L596.3 526.9L600.8 526.5L605.3 525.9L609.9 525.2L614.4 524.3L618.9 523.2L623.5 521.8L628.0 519.9L632.5 517.8L637.1 515.5L641.6 512.7L646.1 508.4L646.1 508.4L641.6 511.2L637.1 512.7L632.5 514.1L628.0 515.2L623.5 516.3L618.9 517.4L614.4 518.6L609.9 519.7L605.3 520.7L600.8 521.5L596.3 522.1L591.7 522.6L587.2 523.0L582.7 523.1L578.1 523.1L573.6 522.8L569.1 522.3L564.5 521.4L560.0 520.0L555.5 515.5ZM558.2 522.2L562.5 527.8L566.7 529.5L570.9 530.6L575.1 531.3L579.3 531.8L583.5 532.1L587.8 532.2L592.0 532.2L596.2 532.0L600.4 531.6L604.6 531.2L608.8 530.6L613.1 529.8L617.3 528.9L621.5 527.5L625.7 525.9L629.9 524.1L634.1 522.0L638.3 519.5L642.6 515.0L642.6 515.0L638.3 518.0L634.1 519.4L629.9 520.6L625.7 521.6L621.5 522.5L617.3 523.3L613.1 524.3L608.8 525.2L604.6 526.0L600.4 526.7L596.2 527.2L592.0 527.6L587.8 527.9L583.5 528.0L579.3 528.0L575.1 527.8L570.9 527.3L566.7 526.5L562.5 525.2L558.2 520.3Z" fill="url(#fg)"/>
<path d="M524.5 182.2 C530 179.6 536 177.6 541.5 177.7 C546 177.8 549 178.6 551.5 180.2 C547 181.6 543 182.4 540.4 183.6 C535 182 530 182 524.5 182.2Z" fill="#cdd831"/>
<path d="M540.2 183.5 L540.9 250 L540.2 300 L539.8 400 L540.4 450 L542.4 482" fill="none" stroke="url(#qg2)" stroke-width="1.3"/>
<path d="M541.2 468L541.7 480L542.6 490L545.6 502L550.6 515L556.6 527L562.5 540L569 555L579.6 574L588 585L595 592.5L602.5 598L602.8 598L600.5 592.5L594.5 585L587.5 574L579.6 555L573 540L567.4 527L560 515L552.6 502L547 490L543.6 480L541.4 468Z" fill="url(#qg)"/>
</svg>
<span class="lat" style="left:764px;top:591.18px;font-size:22px;color:#fff;font-weight:bold;transform-origin:0 0;transform:scaleX(1.015);font-style:italic;opacity:.8">jingyan.baidu.com</span>
<div class="abs" id="menubar"></div>
<div class="abs" style="left:0;top:27px;width:1000px;height:1px;background:#5a5a5a"></div>
<div class="abs" style="left:0;top:28px;width:1000px;height:1px;background:#3b3b3b"></div>
<span class="lat" style="left:8.2px;top:2.67px;font-size:20px;color:#d09a74;font-weight:bold;transform-origin:0 0;transform:scaleX(0.825);">Ai</span>
<svg class="abs" style="left:44px;top:18px" width="1" height="1"><text class="t" x="0" y="0" font-size="12" fill="#e4e4e4">文件</text></svg>
<span class="lat" style="left:68.2px;top:7.42px;font-size:12.5px;color:#e4e4e4;transform-origin:0 0;transform:scaleX(0.739);">(F)</span>
<svg class="abs" style="left:97px;top:18px" width="1" height="1"><text class="t" x="0" y="0" font-size="12" fill="#e4e4e4">编辑</text></svg>
<span class="lat" style="left:121.2px;top:7.42px;font-size:12.5px;color:#e4e4e4;transform-origin:0 0;transform:scaleX(0.768);">(E)</span>
<svg class="abs" style="left:149px;top:18px" width="1" height="1"><text class="t" x="0" y="0" font-size="12" fill="#e4e4e4">对象</text></svg>
<span class="lat" style="left:173.2px;top:7.42px;font-size:12.5px;color:#e4e4e4;transform-origin:0 0;transform:scaleX(0.931);">(O)</span>
<svg class="abs" style="left:206px;top:18px" width="1" height="1"><text class="t" x="0" y="0" font-size="12" fill="#e4e4e4">文字</text></svg>
<span class="lat" style="left:230.2px;top:7.42px;font-size:12.5px;color:#e4e4e4;transform-origin:0 0;transform:scaleX(0.802);">(T)</span>
<svg class="abs" style="left:259px;top:18px" width="1" height="1"><text class="t" x="0" y="0" font-size="12" fill="#e4e4e4">选择</text></svg>
<span class="lat" style="left:283.2px;top:7.42px;font-size:12.5px;color:#e4e4e4;transform-origin:0 0;transform:scaleX(0.828);">(S)</span>
<svg class="abs" style="left:312px;top:18px" width="1" height="1"><text class="t" x="0" y="0" font-size="12" fill="#e4e4e4">效果</text></svg>
<span class="lat" style="left:336.2px;top:7.42px;font-size:12.5px;color:#e4e4e4;transform-origin:0 0;transform:scaleX(0.853);">(C)</span>
<svg class="abs" style="left:367px;top:18px" width="1" height="1"><text class="t" x="0" y="0" font-size="12" fill="#e4e4e4">视图</text></svg>
<span class="lat" style="left:391.2px;top:7.42px;font-size:12.5px;color:#e4e4e4;transform-origin:0 0;transform:scaleX(0.828);">(V)</span>
<svg class="abs" style="left:421px;top:18px" width="1" height="1"><text class="t" x="0" y="0" font-size="12" fill="#e4e4e4">窗口</text></svg>
<span class="lat" style="left:445.2px;top:7.42px;font-size:12.5px;color:#e4e4e4;transform-origin:0 0;transform:scaleX(0.934);">(W)</span>
<svg class="abs" style="left:480px;top:18px" width="1" height="1"><text class="t" x="0" y="0" font-size="12" fill="#e4e4e4">帮助</text></svg>
<span class="lat" style="left:504.2px;top:7.42px;font-size:12.5px;color:#e4e4e4;transform-origin:0 0;transform:scaleX(0.853);">(H)</span>
<div class="abs" style="left:532px;top:5px;width:1px;height:19px;background:#474747"></div>
<div class="abs" style="left:533px;top:5px;width:1px;height:19px;background:#5c5c5c"></div>
<div class="abs" style="left:547px;top:6px;width:16px;height:16px;background:#c4c4c4;border-radius:1px"></div>
<span class="lat" style="left:549.6px;top:9.11px;font-size:10.5px;color:#555;font-weight:bold;transform-origin:0 0;transform:scaleX(0.926);">Br</span>
<div class="abs" style="left:581px;top:6px;width:16px;height:16px;background:#c4c4c4;border-radius:1px"></div>
<span class="lat" style="left:583.6px;top:9.11px;font-size:10.5px;color:#555;font-weight:bold;transform-origin:0 0;transform:scaleX(1.028);">St</span>
<svg class="abs" style="left:611px;top:8px" width="17" height="11"><rect x="0" y="0" width="6.5" height="10.5" fill="#cfcfcf"/><rect x="8" y="0" width="8.5" height="4.5" fill="#cfcfcf"/><rect x="8" y="6" width="8.5" height="4.5" fill="#cfcfcf"/></svg>
<svg class="abs" style="left:0;top:0" width="1" height="1"><path d="M636.0 11.649999999999999 L639 14.75 L642.0 11.649999999999999" fill="none" stroke="#e0e0e0" stroke-width="1.6" stroke-linecap="round" stroke-linejoin="round"/></svg>
<svg class="abs" style="left:658px;top:4px" width="22" height="20" viewBox="0 0 22 20">
<g fill="#8a8a8a"><path d="M2 9.5 L13.5 2.2 L15.5 3.2 L16 5.2 L7.5 14.5 L6.3 11.6 Z"/><path d="M3.5 12.5 L6 11.5 L5.2 14.5Z"/><path d="M8 15.5 L10.5 12.5 L10.5 16Z"/></g>
<circle cx="14.5" cy="13.2" r="3.6" fill="#535353" stroke="#bdbdbd" stroke-width="1.5"/><rect x="13.3" y="7.6" width="2.4" height="3" fill="#535353"/><path d="M14.5 8.5V13" stroke="#bdbdbd" stroke-width="1.5" stroke-linecap="round"/></svg>
<div class="abs" style="left:978px;top:5px;width:1px;height:19px;background:#474747"></div>
<div class="abs" style="left:979px;top:5px;width:1px;height:19px;background:#5c5c5c"></div>
<span class="lat" style="left:990.5px;top:6.17px;font-size:13.5px;color:#e2e2e2;">W</span>
<div class="abs" style="left:944px;top:-6px;width:70px;height:8px;background:#383838;border-radius:5px;filter:blur(1.2px)"></div>
<div class="abs" id="ctrl"></div>
<div class="abs" style="left:4px;top:33px;width:2px;height:23px;background:repeating-linear-gradient(#6a6a6a 0 1px,#4a4a4a 1px 2px)"></div>
<svg class="abs" style="left:14.5px;top:47.5px" width="1" height="1"><text class="t" x="0" y="0" font-size="11.2" fill="#b4b4b4">未选择对象</text></svg>
<svg class="abs" style="left:102px;top:35px" width="18" height="18"><rect width="18" height="18" fill="#fff"/><path d="M1 17L17 1" stroke="#e3151f" stroke-width="2"/></svg>
<div class="dd" style="left:121px;top:35px;width:16px;height:18px"></div>
<svg class="abs" style="left:0;top:0" width="1" height="1"><path d="M126.1 42.95 L129 46.05 L131.9 42.95" fill="none" stroke="#e6e6e6" stroke-width="1.5" stroke-linecap="round" stroke-linejoin="round"/></svg>
<svg class="abs" style="left:144px;top:35px" width="18" height="18"><defs><linearGradient id="mg" x1="0" x2="1" y1="0" y2="0"><stop offset="0" stop-color="#222"/><stop offset=".12" stop-color="#888"/><stop offset=".5" stop-color="#fff"/><stop offset=".88" stop-color="#888"/><stop offset="1" stop-color="#222"/></linearGradient></defs><rect width="18" height="18" fill="url(#mg)" stroke="#ddd" stroke-width="1"/><rect x="6.3" y="6.3" width="5.4" height="5.4" fill="#fff" stroke="#222" stroke-width="1.2"/></svg>
<div class="dd" style="left:163px;top:35px;width:15px;height:18px"></div>
<svg class="abs" style="left:0;top:0" width="1" height="1"><path d="M167.6 42.95 L170.5 46.05 L173.4 42.95" fill="none" stroke="#e6e6e6" stroke-width="1.5" stroke-linecap="round" stroke-linejoin="round"/></svg>
<svg class="abs" style="left:191px;top:48px" width="1" height="1"><text class="t" x="0" y="0" font-size="11.5" fill="#dcdcdc">描边</text></svg>
<svg class="abs" style="left:216.5px;top:47px" width="1" height="1"><text class="t" x="0" y="0" font-size="11.5" fill="#dcdcdc">:</text></svg>
<div class="abs" style="left:191px;top:50px;width:31px;height:1px;background:repeating-linear-gradient(90deg,#cfcfcf 0 1px,transparent 1px 2px)"></div>
<div class="dd" style="left:227px;top:35px;width:16px;height:18px"></div>
<svg class="abs" style="left:0;top:0" width="1" height="1"><path d="M232.0 41.9 L235 38.699999999999996 L238.0 41.9" fill="none" stroke="#e6e6e6" stroke-width="1.5" stroke-linecap="round" stroke-linejoin="round"/></svg>
<svg class="abs" style="left:0;top:0" width="1" height="1"><path d="M232.0 47.1 L235 50.300000000000004 L238.0 47.1" fill="none" stroke="#e6e6e6" stroke-width="1.5" stroke-linecap="round" stroke-linejoin="round"/></svg>
<div class="inp" style="left:244px;top:35px;width:41px;height:18px"></div>
<span class="lat" style="left:246.3px;top:38.41px;font-size:10.5px;color:#f0f0f0;font-family:'Liberation Mono',monospace;letter-spacing:-0.75px">20.251</span>
<div class="dd" style="left:286px;top:35px;width:16px;height:18px"></div>
<svg class="abs" style="left:0;top:0" width="1" height="1"><path d="M291.1 42.95 L294 46.05 L296.9 42.95" fill="none" stroke="#e6e6e6" stroke-width="1.5" stroke-linecap="round" stroke-linejoin="round"/></svg>
<svg class="abs" style="left:308px;top:35px" width="84" height="18"><rect width="84" height="18" fill="#e8e8e8"/><path d="M8 9.3 C 22 7.4, 42 4.6, 55 3.9 C 63 4.2, 71 6.4, 75.5 9.3 C 71 12.4, 63 14.6, 55 15 C 42 14.2, 22 11.4, 8 9.3Z" fill="#000"/></svg>
<div class="dd" style="left:393px;top:35px;width:16px;height:18px"></div>
<svg class="abs" style="left:0;top:0" width="1" height="1"><path d="M398.1 42.95 L401 46.05 L403.9 42.95" fill="none" stroke="#e6e6e6" stroke-width="1.5" stroke-linecap="round" stroke-linejoin="round"/></svg>
<div class="abs" style="left:415px;top:35px;width:82px;height:18px;background:#e8e8e8"></div>
<div class="abs" style="left:422px;top:43px;width:3.2px;height:3.2px;border-radius:2px;background:#222"></div>
<span class="lat" style="left:436.8px;top:39.19px;font-size:11px;color:#333;font-family:'Liberation Mono',monospace">3</span>
<svg class="abs" style="left:449px;top:48.3px" width="1" height="1"><text class="t" x="0" y="0" font-size="10.8" fill="#333">点圆形</text></svg>
<div class="dd" style="left:498px;top:35px;width:15px;height:18px"></div>
<svg class="abs" style="left:0;top:0" width="1" height="1"><path d="M502.6 42.95 L505.5 46.05 L508.4 42.95" fill="none" stroke="#e6e6e6" stroke-width="1.5" stroke-linecap="round" stroke-linejoin="round"/></svg>
<svg class="abs" style="left:520px;top:48px" width="1" height="1"><text class="t" x="0" y="0" font-size="11.2" fill="#dcdcdc">不透明度</text></svg>
<svg class="abs" style="left:566.5px;top:47px" width="1" height="1"><text class="t" x="0" y="0" font-size="11.5" fill="#dcdcdc">:</text></svg>
<div class="abs" style="left:520px;top:50px;width:52px;height:1px;background:repeating-linear-gradient(90deg,#cfcfcf 0 1px,transparent 1px 2px)"></div>
<div class="inp" style="left:580px;top:35px;width:47px;height:18px"></div>
<span class="lat" style="left:582px;top:36.87px;font-size:11.5px;color:#f0f0f0;font-family:'Liberation Mono',monospace;letter-spacing:-1.3px">25%</span>
<div class="dd" style="left:628px;top:35px;width:14px;height:18px"></div>
<svg class="abs" style="left:0;top:0" width="1" height="1"><path d="M633.3 41 L636.8 44.5 L633.3 48" fill="none" stroke="#e6e6e6" stroke-width="1.6" stroke-linecap="round" stroke-linejoin="round"/></svg>
<svg class="abs" style="left:649px;top:48px" width="1" height="1"><text class="t" x="0" y="0" font-size="11.2" fill="#b4b4b4">样式</text></svg>
<svg class="abs" style="left:673px;top:47px" width="1" height="1"><text class="t" x="0" y="0" font-size="11.5" fill="#b4b4b4">:</text></svg>
<div class="abs" style="left:686px;top:35px;width:18px;height:18px;background:#e6e6e6"></div>
<div class="dd" style="left:706px;top:35px;width:15px;height:18px"></div>
<svg class="abs" style="left:0;top:0" width="1" height="1"><path d="M710.6 42.95 L713.5 46.05 L716.4 42.95" fill="none" stroke="#e6e6e6" stroke-width="1.5" stroke-linecap="round" stroke-linejoin="round"/></svg>
<div class="abs" style="left:727px;top:34px;width:1px;height:21px;background:#474747"></div>
<div class="btn" style="left:733px;top:35px;width:63px;height:18px"></div>
<svg class="abs" style="left:743.5px;top:48.2px" width="1" height="1"><text class="t" x="0" y="0" font-size="11" fill="#ececec">文档设置</text></svg>
<div class="btn" style="left:802px;top:35px;width:63px;height:18px"></div>
<svg class="abs" style="left:817.5px;top:48.2px" width="1" height="1"><text class="t" x="0" y="0" font-size="11" fill="#ececec">首选项</text></svg>
<svg class="abs" style="left:874px;top:36px" width="18" height="18" viewBox="0 0 18 18"><path d="M1.5 5.5H7M1.5 5.5V8" stroke="#d0d0d0" stroke-width="1.2" fill="none"/><rect x="9.5" y="1" width="4.5" height="4.5" fill="none" stroke="#d0d0d0" stroke-width="1.1"/><path d="M7 5.2 L7 15 L9.7 12.4 L13.8 12.4 Z" fill="#e4e4e4"/></svg>
<svg class="abs" style="left:0;top:0" width="1" height="1"><path d="M897.1 42.150000000000006 L900 45.25 L902.9 42.150000000000006" fill="none" stroke="#e6e6e6" stroke-width="1.5" stroke-linecap="round" stroke-linejoin="round"/></svg>
<div class="abs" id="tabs"></div><div class="abs" id="tab"></div>
<div class="abs" style="left:69px;top:87px;width:931px;height:1px;background:#3a3a3a"></div>
<svg class="abs" style="left:78.3px;top:79.6px" width="1" height="1"><text class="t" x="0" y="0" font-size="12" fill="#e2e2e2">未标题</text></svg>
<span class="lat" style="left:114px;top:69.24px;font-size:12px;color:#e2e2e2;transform-origin:0 0;transform:scaleX(1.013);">-1* @ 66.67% (RGB/</span>
<svg class="abs" style="left:227px;top:79.5px" width="1" height="1"><text class="t" x="0" y="0" font-size="11" fill="#e2e2e2">预览</text></svg>
<span class="lat" style="left:248px;top:69.24px;font-size:12px;color:#e2e2e2;">)</span>
<svg class="abs" style="left:0;top:0" width="1" height="1"><path d="M263.1 71.9 L268.4 77.2 M268.4 71.9 L263.1 77.2" stroke="#e8e8e8" stroke-width="1.9"/></svg>
<div class="abs" style="left:66px;top:60px;width:3px;height:580px;background:#3d3d3d"></div>
<div class="abs" id="tools"></div><div class="abs" id="toolshead"></div>
<svg class="abs" style="left:0;top:0" width="68" height="640" viewBox="0 0 68 640"><path d="M9.4 63.9 V69.1 L6.6 66.5Z M12.6 63.9 V69.1 L9.8 66.5Z" fill="#dedede"/><rect x="24" y="75" width="18" height="3" fill="#474747"/><rect x="24" y="75" width="1" height="3" fill="#3b3b3b"/><rect x="26" y="75" width="1" height="3" fill="#3b3b3b"/><rect x="28" y="75" width="1" height="3" fill="#3b3b3b"/><rect x="30" y="75" width="1" height="3" fill="#3b3b3b"/><rect x="32" y="75" width="1" height="3" fill="#3b3b3b"/><rect x="34" y="75" width="1" height="3" fill="#3b3b3b"/><rect x="36" y="75" width="1" height="3" fill="#3b3b3b"/><rect x="38" y="75" width="1" height="3" fill="#3b3b3b"/><rect x="40" y="75" width="1" height="3" fill="#3b3b3b"/><rect x="0" y="72" width="4.5" height="568" fill="#4a4a4a"/><rect x="7" y="134.5" width="53" height="1" fill="#494949"/><rect x="7" y="230.5" width="53" height="1" fill="#494949"/><rect x="7" y="302.5" width="53" height="1" fill="#494949"/><rect x="7" y="351.5" width="53" height="1" fill="#494949"/><rect x="7" y="378.5" width="53" height="1" fill="#494949"/><rect x="7" y="88" width="26" height="20.5" rx="2" fill="#2c2c2c"/><path d="M15.4 90.8 V106.6 L19.4 102.7 L25.8 101.4 Z" fill="none" stroke="#c6c6c6" stroke-width="1.25" stroke-linejoin="miter"/><path d="M43 90.2 V107.2 L47.6 102.9 L54.8 101.5 Z" fill="#cdcdcd" /><path d="M57.0 107.6H60.2V104.39999999999999Z" fill="#cdcdcd"/><path d="M12.8 127.8 L23.6 117.8" fill="none" stroke="#cdcdcd" stroke-width="1.9" stroke-linecap="round"/><path d="M16.6 113.6 L17.752000000000002 115.648 L19.8 116.8 L17.752000000000002 117.952 L16.6 120.0 L15.448000000000002 117.952 L13.400000000000002 116.8 L15.448000000000002 115.648Z" fill="#cdcdcd" /><path d="M24.6 113.10000000000001 L25.428 114.572 L26.900000000000002 115.4 L25.428 116.22800000000001 L24.6 117.7 L23.772000000000002 116.22800000000001 L22.3 115.4 L23.772000000000002 114.572Z" fill="#cdcdcd" /><path d="M25.8 119.8 L26.448 120.952 L27.6 121.6 L26.448 122.24799999999999 L25.8 123.39999999999999 L25.152 122.24799999999999 L24.0 121.6 L25.152 120.952Z" fill="#cdcdcd" /><path d="M47.5 116.6 C43.5 116.3 40.3 118.2 40.5 121 C40.7 123.3 43 124.3 44.6 123.4 C46 122.6 45.3 120.8 44 121.2 C43 121.6 43.3 123.3 44.8 124.2 C46 125 46 127 44.5 128.3" fill="none" stroke="#cdcdcd" stroke-width="1.3" /><path d="M47.5 116.6 C52 116.2 55.8 118.3 55.8 120.8" fill="none" stroke="#cdcdcd" stroke-width="1.3" /><path d="M48.3 117.3 V129.8 L51.3 126.6 L57.2 125.4 Z" fill="#cdcdcd" /><path d="M14.4 155.8 L15.6 149.60000000000002 L21.7 145.20000000000002 L26.0 149.20000000000002 L21.0 154.8Z" fill="#cdcdcd" /><path d="M22.700000000000003 144.20000000000002 L25.0 142.0 L29.0 146.0 L26.8 148.20000000000002Z" fill="#cdcdcd" /><path d="M15.4 154.8 L19.6 150.60000000000002" fill="none" stroke="#535353" stroke-width="0.9" /><circle cx="20.2" cy="150.0" r="1" fill="#535353"/><path d="M9.3 145 H15.3 M12.3 142 V148" fill="none" stroke="#cdcdcd" stroke-width="1.7" /><path d="M28.8 158H32V154.8Z" fill="#cdcdcd"/><path d="M42.4 155.8 L43.6 149.60000000000002 L49.699999999999996 145.20000000000002 L54.0 149.20000000000002 L49.0 154.8Z" fill="#cdcdcd" /><path d="M50.7 144.20000000000002 L53.0 142.0 L57.0 146.0 L54.8 148.20000000000002Z" fill="#cdcdcd" /><path d="M43.4 154.8 L47.6 150.60000000000002" fill="none" stroke="#535353" stroke-width="0.9" /><circle cx="48.199999999999996" cy="150.0" r="1" fill="#535353"/><path d="M39.8 141.8 C42.5 144.5 41.3 146.5 40 149 C38.8 151.6 39.2 154.6 41.2 155.6 C42.3 156 43.3 155.2 44 154.4" fill="none" stroke="#cdcdcd" stroke-width="1.2" /><path d="M13.2 167.2 V164.4 H26 V167.2 M19.6 164.6 V177 M16.8 177.3 H22.4" fill="none" stroke="#cdcdcd" stroke-width="1.7" /><path d="M28.8 181H32V177.8Z" fill="#cdcdcd"/><path d="M41.2 177 L54.6 164.6" fill="none" stroke="#cdcdcd" stroke-width="1.6" stroke-linecap="round"/><path d="M57.0 181H60.2V177.8Z" fill="#cdcdcd"/><ellipse cx="19.7" cy="193.3" rx="8.2" ry="6" fill="#777" stroke="#cdcdcd" stroke-width="1.4"/><path d="M28.8 203.3H32V200.10000000000002Z" fill="#cdcdcd"/><path d="M56.3 185.2 L48.6 194.2 L47 192.8 L54.6 184.6 C55.6 183.8 57 184.4 56.3 185.2Z" fill="#cdcdcd" stroke="#cdcdcd" stroke-width="0.8" /><path d="M46.6 193.8 L48.4 195.6 C48.6 198.6 45 200.6 40.2 200.8 C42.6 199.2 42.6 195.4 46.6 193.8Z" fill="#cdcdcd" /><path d="M57.0 203.3H60.2V200.10000000000002Z" fill="#cdcdcd"/><circle cx="16.3" cy="214.6" r="5.6" fill="#777" stroke="#cdcdcd" stroke-width="1.5"/><path d="M28 210.2 L30.2 212.4 L20.4 222.2 L16.8 223.4 L18 219.9Z" fill="#cdcdcd" stroke="#535353" stroke-width="0.6" /><path d="M28.8 226.6H32V223.4Z" fill="#cdcdcd"/><path d="M49.5 208.4 L56 214 L47.2 223.4 L44.4 223.4 L40.4 219.4 Z" fill="#cdcdcd" /><path d="M42.4 218.3 L44.6 216 L48 219.4 L45.8 221.8Z" fill="#3a3a3a" /><path d="M57.0 226.6H60.2V223.4Z" fill="#cdcdcd"/><path d="M16.4 239.3 A6.2 6.2 0 0 1 24.6 247.6" fill="none" stroke="#cdcdcd" stroke-width="1.7" /><path d="M24.6 247.6 A6.2 6.2 0 0 1 13.2 245.2" fill="none" stroke="#cdcdcd" stroke-width="1.5" stroke-dasharray="1.2 1"/><path d="M12.2 237 L17.6 237.6 L13.4 242.4Z" fill="#cdcdcd" /><path d="M28.8 252H32V248.8Z" fill="#cdcdcd"/><path d="M43.6 235.6 H55.8 V246.6 H43.6Z M39.6 243 H48.6 V250.2 H39.6Z" fill="none" stroke="#cdcdcd" stroke-width="1.2" /><path d="M49.6 241.6 L53 238.2" fill="none" stroke="#cdcdcd" stroke-width="1.3" /><path d="M51.2 237.4 H54.2 V240.4Z" fill="#cdcdcd" /><path d="M57.0 252H60.2V248.8Z" fill="#cdcdcd"/><path d="M11 259 H28 V262.6 C24.6 262.4 23.2 264 23.4 265.6 C23.6 267.4 25.4 268.6 28 268.2 V271.8 H11Z" fill="#cdcdcd" /><path d="M28.8 275H32V271.8Z" fill="#cdcdcd"/><path d="M39.4 257.6 V270.6 L43 267 L47.6 264.6Z" fill="#cdcdcd" /><path d="M45.6 260.2 H56.4 V271.2 H45.6Z" fill="none" stroke="#cdcdcd" stroke-width="1.3" stroke-dasharray="2 1.2"/><circle cx="15.6" cy="286.8" r="4.3" fill="none" stroke="#cdcdcd" stroke-width="1.2"/><circle cx="20.6" cy="284.6" r="4.5" fill="none" stroke="#cdcdcd" stroke-width="1.2"/><path d="M15 286.6 H19 M17 284.6 V288.6" fill="none" stroke="#9a9a9a" stroke-width="0.8" stroke-dasharray="1 0.8"/><path d="M22.6 286 V296.4 L25.4 293.6 L30.4 292.8Z" fill="#cdcdcd" stroke="#535353" stroke-width="0.5" /><path d="M28.8 298H32V294.8Z" fill="#cdcdcd"/><path d="M39.6 280.6 L48.6 283.4 V292.6 L39.6 295.6Z M39.6 288 L48.6 288 M44.1 282 V294.1" fill="none" stroke="#cdcdcd" stroke-width="1.2" /><path d="M48.6 285.5 L57 295.6 H39.6 L48.6 292.6Z" fill="#8a8a8a" /><path d="M46 293.2 H54.8 M43 294.6 H56.2" fill="none" stroke="#cdcdcd" stroke-width="0.8" /><path d="M57.0 298H60.2V294.8Z" fill="#cdcdcd"/><path d="M12.2 309.2 H27 V322 H12.2Z" fill="#666" stroke="#cdcdcd" stroke-width="1.2" /><path d="M19.6 309.4 C18.6 313.6 20.6 317.6 19.4 321.8 M12.4 315 C15.2 313.2 18 315.4 19.5 316.4 C22 317.8 24.6 315 26.8 314.4 M13.6 310 C15 312 17 312.6 19.2 313.4 M13 319 C15 319.2 17.4 319.4 19.4 320.6 M20 312.6 C22 311.4 24 311.4 26.4 310.2 M20 320 C22.4 319 24.6 319.6 26.6 318.6" fill="none" stroke="#cdcdcd" stroke-width="1" /><defs><linearGradient id="tg" x1="0" x2="1"><stop offset="0" stop-color="#d2d2d2"/><stop offset="1" stop-color="#5a5a5a"/></linearGradient><linearGradient id="mg2" x1="0" x2="1"><stop offset="0" stop-color="#1c1c1c"/><stop offset=".1" stop-color="#5a5a5a"/><stop offset=".3" stop-color="#d4d4d4"/><stop offset=".44" stop-color="#ffffff"/><stop offset=".58" stop-color="#ffffff"/><stop offset=".72" stop-color="#d0d0d0"/><stop offset=".9" stop-color="#5a5a5a"/><stop offset="1" stop-color="#1c1c1c"/></linearGradient></defs><rect x="40.2" y="309.2" width="15.8" height="12.8" fill="url(#tg)" stroke="#cdcdcd" stroke-width="1"/><path d="M12 345.6 L13 342.4 L21.4 334 L23.6 336.2 L15.2 344.6Z" fill="#666" stroke="#cdcdcd" stroke-width="1.2" /><path d="M20.6 333 L24.6 337 M22.4 335 L26.4 330.8" fill="none" stroke="#cdcdcd" stroke-width="2.4" stroke-linecap="round"/><path d="M28.8 347.6H32V344.40000000000003Z" fill="#cdcdcd"/><path d="M39.6 331.4 H46.2 V338.2 H39.6Z" fill="#cdcdcd" /><circle cx="47.6" cy="337" r="3.6" fill="#8d8d8d" stroke="#b4b4b4" stroke-width="0.8"/><circle cx="52.4" cy="341" r="3.4" fill="#5a5a5a" stroke="#cdcdcd" stroke-width="1.4"/><circle cx="52.4" cy="341" r="1" fill="#2a2a2a"/><rect x="11" y="358" width="1.7" height="1.7" fill="#cdcdcd"/><rect x="13.6" y="358" width="1.7" height="1.7" fill="#cdcdcd"/><rect x="16.2" y="358" width="1.7" height="1.7" fill="#cdcdcd"/><rect x="11" y="360.6" width="1.7" height="1.7" fill="#cdcdcd"/><rect x="13.6" y="360.6" width="1.7" height="1.7" fill="#cdcdcd"/><rect x="11" y="363.2" width="1.7" height="1.7" fill="#cdcdcd"/><rect x="13.6" y="363.2" width="1.7" height="1.7" fill="#cdcdcd"/><rect x="11" y="365.4" width="1.7" height="1.7" fill="#cdcdcd"/><path d="M20 362.4 H28.4 V372.6 H20Z" fill="#666" stroke="#cdcdcd" stroke-width="1.3" /><path d="M21.8 358.2 H26 V362 H21.8Z" fill="#cdcdcd" /><circle cx="24.2" cy="367.4" r="2.2" fill="none" stroke="#cdcdcd" stroke-width="1.1"/><circle cx="24.2" cy="367.4" r="0.7" fill="#cdcdcd"/><path d="M28.8 374.6H32V371.40000000000003Z" fill="#cdcdcd"/><path d="M39.8 357 V371.6 H56.4" fill="none" stroke="#cdcdcd" stroke-width="1.3" /><path d="M42.2 364.2 H45.2 V371 H42.2Z M47.6 358.6 H51 V371 H47.6Z M53 361.4 H55.8 V371 H53Z" fill="#cdcdcd" /><path d="M57.0 374.6H60.2V371.40000000000003Z" fill="#cdcdcd"/><path d="M15.4 383.8 V399.4 H26.6 M10 388.8 H15.4" fill="none" stroke="#cdcdcd" stroke-width="1.1" /><path d="M15.8 389.2 H23.4 L26.4 392.2 V399 H15.8Z" fill="#777" stroke="#cdcdcd" stroke-width="0.9" /><path d="M23.4 389.2 V392.2 H26.4" fill="#cdcdcd" stroke="#cdcdcd" stroke-width="0.8" /><path d="M40 399.8 L47.6 388.6 L52.4 385 L55.6 388.2 L52.2 393 L41.4 399.6Z" fill="#cdcdcd" /><path d="M43.2 396.8 L50 389.4 L51.6 391 Z" fill="#535353" /><path d="M57.0 402H60.2V398.8Z" fill="#cdcdcd"/><path d="M15.6 412.6 L13 410 C11.8 409 10.8 410.2 11.8 411.4 L16.6 418.2 C17.6 420 19 421.6 20.4 421.6 H22.4 C24.4 421.6 25.6 420 25.8 418 L26.6 410.8 C26.8 409.6 25.2 409.2 24.8 410.4 L24.2 413.4 L24 407.8 C24 406.4 22.2 406.4 22.2 407.8 L22 412.6 L21.2 406.6 C21 405.2 19.2 405.4 19.4 406.8 L19.8 412.6 L18.2 408 C17.8 406.6 16 407.2 16.4 408.6 L17.8 414.6Z" fill="#cdcdcd" stroke="#cdcdcd" stroke-width="0.5" stroke-linejoin="round"/><path d="M28.8 424.6H32V421.40000000000003Z" fill="#cdcdcd"/><circle cx="46" cy="413" r="5.2" fill="none" stroke="#cdcdcd" stroke-width="1.5"/><path d="M49.8 416.8 L55.4 422.4" fill="none" stroke="#cdcdcd" stroke-width="2.2" stroke-linecap="round"/><rect x="6" y="432.5" width="33.5" height="33.8" fill="#fff" stroke="#3a3a3a" stroke-width="0.8"/><path d="M6.6 465.8 L39 433" fill="none" stroke="#e3131e" stroke-width="1.9" /><rect x="22.6" y="449.6" width="34" height="33.4" fill="#3a3a3a"/><rect x="23.6" y="450.6" width="32" height="31.4" fill="url(#mg2)" stroke="#f0f0f0" stroke-width="1"/><rect x="32" y="459" width="15.4" height="15" fill="#545454" stroke="#f4f4f4" stroke-width="1.1"/><path d="M50.4 437.4 C53.6 437 55.4 438.6 55.4 442" fill="none" stroke="#cdcdcd" stroke-width="1.4" /><path d="M48 437.4 L51.6 434.6 V440.2Z M55.4 445 L52.6 441.4 H58.2Z" fill="#cdcdcd" /><rect x="10.2" y="475.2" width="6" height="6" fill="#111" stroke="#e8e8e8" stroke-width="1"/><rect x="7" y="472" width="6.4" height="6.4" fill="#fff" stroke="#222" stroke-width="1"/><rect x="8" y="492.3" width="13" height="12.2" fill="#fff" stroke="#1a1a1a" stroke-width="1"/><rect x="11.3" y="495.5" width="6.4" height="5.8" fill="#6e6e6e" stroke="#222" stroke-width="0.7"/><rect x="24.6" y="490" width="17" height="17" rx="1.5" fill="#2c2c2c"/><rect x="27" y="492.4" width="12.4" height="12.2" fill="url(#mg2)"/><rect x="46" y="492.3" width="12.2" height="12.2" fill="#fff" stroke="#1a1a1a" stroke-width="1"/><path d="M47 503.6 L57.2 493.2" fill="none" stroke="#e3131e" stroke-width="2.6" /><rect x="7" y="513.6" width="16.4" height="15.6" rx="1.5" fill="#2f2f2f"/><rect x="7" y="513.6" width="52" height="15.6" rx="1.5" fill="none" stroke="#4a4a4a" stroke-width="0.8"/><g opacity="1"><circle cx="13.8" cy="520" r="3.6" fill="#7a7a7a" stroke="#d0d0d0" stroke-width="1.2"/><rect x="14.8" y="521.4" width="4.6" height="4.4" fill="#d0d0d0"/></g><g opacity="1"><circle cx="32.8" cy="520" r="3.6" fill="#7a7a7a" stroke="#c0c0c0" stroke-width="1.2"/><rect x="33.8" y="521.4" width="4.6" height="4.4" fill="#c0c0c0"/></g><circle cx="52.6" cy="521" r="3" fill="none" stroke="#666" stroke-width="1.2"/><circle cx="52.6" cy="521" r="1" fill="#666"/><rect x="31" y="538.2" width="13" height="10.6" fill="#6f6f6f" stroke="#cfcfcf" stroke-width="1"/><rect x="31" y="538.2" width="13" height="2" fill="#cfcfcf"/><rect x="23.6" y="542.2" width="13" height="10.6" fill="#6f6f6f" stroke="#cfcfcf" stroke-width="1"/><rect x="23.6" y="542.2" width="13" height="2" fill="#cfcfcf"/><rect x="31.5" y="540.4" width="12" height="8" fill="#6f6f6f"/><path d="M31 542.2 V548.8 H36.6" fill="none" stroke="#cfcfcf" stroke-width="1"/></svg>
</div></body></html>
